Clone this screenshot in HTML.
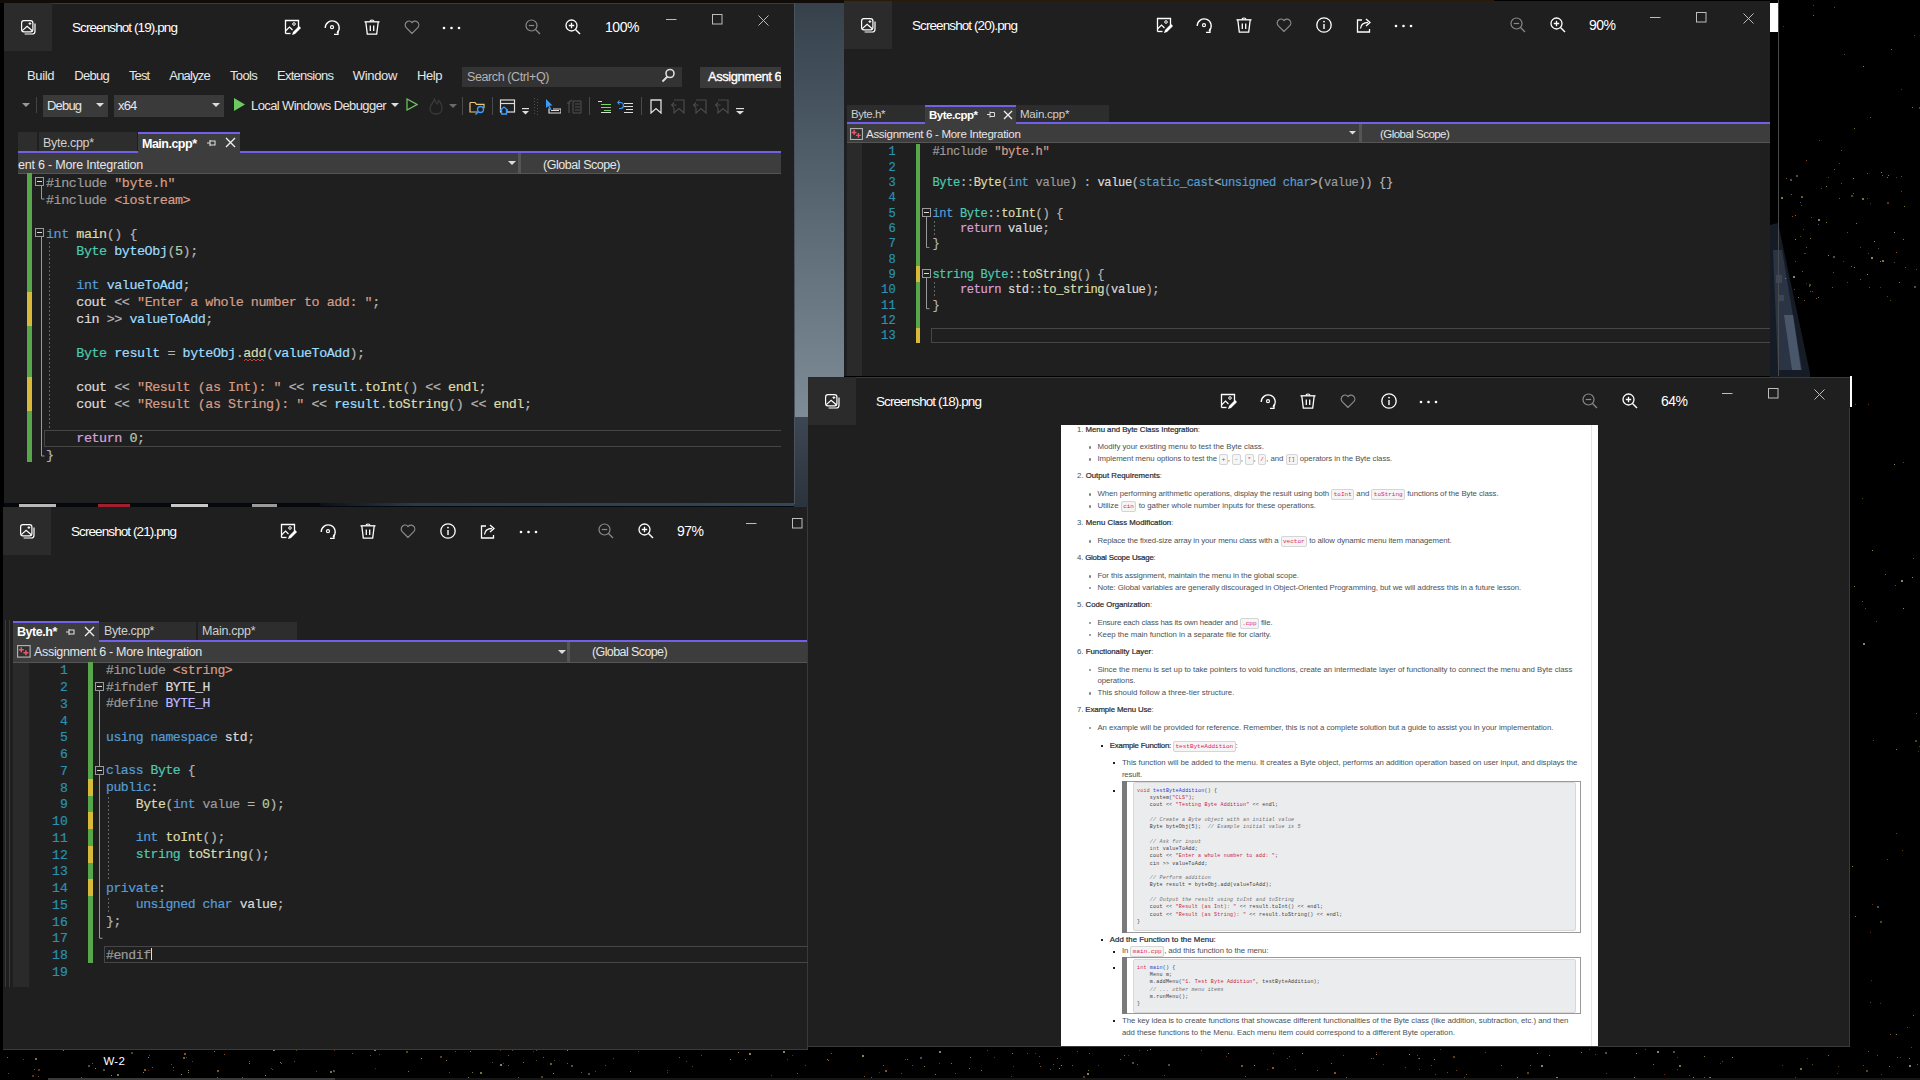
<!DOCTYPE html><html><head><meta charset="utf-8"><style>
html,body{margin:0;padding:0;width:1920px;height:1080px;overflow:hidden;background:#000;}
body{position:relative;}
</style></head><body>
<div style="position:absolute;left:0px;top:0px;width:1920px;height:1080px;background:#000;"></div>
<div style="position:absolute;left:794px;top:0px;width:50px;height:417px;background:linear-gradient(180deg,#35404a 0%,#4a5864 30%,#65737f 65%,#7e8c98 100%);"></div>
<div style="position:absolute;left:794px;top:417px;width:14px;height:90px;background:linear-gradient(180deg,#3d4753,#2b333c);"></div>
<div style="position:absolute;left:0px;top:0px;width:844px;height:3px;background:#120c08;"></div>
<div style="position:absolute;left:844px;top:0px;width:650px;height:1px;background:#2a1a0a;"></div>
<svg style="position:absolute;left:1770px;top:215px;" width="50" height="165" viewBox="0 0 50 165" fill="none"><path d="M0 10l8-2 32 150v7H0z" fill="#161c26"/><path d="M3 35l9 0 20 120H8z" fill="#2a3444"/><path d="M14 100l9 0 8 55h-9z" fill="#4a566a"/><path d="M6 60h6v8H6zM9 80h5v6H9z" fill="#3c4658"/></svg>
<div style="position:absolute;left:1778px;top:0px;width:1px;height:376px;background:#4a4a4a;"></div>
<div style="position:absolute;left:1862px;top:198px;width:2px;height:2px;background:#807040;"></div>
<div style="position:absolute;left:1881px;top:172px;width:1px;height:1px;background:#908060;"></div>
<div style="position:absolute;left:1798px;top:297px;width:1px;height:1px;background:#807040;"></div>
<div style="position:absolute;left:1804px;top:253px;width:1px;height:1px;background:#604018;"></div>
<div style="position:absolute;left:1794px;top:289px;width:1px;height:1px;background:#405060;"></div>
<div style="position:absolute;left:1834px;top:169px;width:1px;height:1px;background:#805420;"></div>
<div style="position:absolute;left:1802px;top:271px;width:1px;height:1px;background:#805420;"></div>
<div style="position:absolute;left:1887px;top:177px;width:1px;height:1px;background:#807040;"></div>
<div style="position:absolute;left:1841px;top:183px;width:1px;height:1px;background:#405060;"></div>
<div style="position:absolute;left:1888px;top:175px;width:1px;height:1px;background:#807040;"></div>
<div style="position:absolute;left:1811px;top:217px;width:1px;height:1px;background:#405060;"></div>
<div style="position:absolute;left:1795px;top:261px;width:1px;height:1px;background:#405060;"></div>
<div style="position:absolute;left:1792px;top:216px;width:1px;height:1px;background:#805420;"></div>
<div style="position:absolute;left:1791px;top:194px;width:1px;height:1px;background:#805420;"></div>
<div style="position:absolute;left:1854px;top:267px;width:1px;height:1px;background:#908060;"></div>
<div style="position:absolute;left:1816px;top:298px;width:1px;height:1px;background:#805420;"></div>
<div style="position:absolute;left:1810px;top:238px;width:1px;height:1px;background:#807040;"></div>
<div style="position:absolute;left:1826px;top:186px;width:1px;height:1px;background:#807040;"></div>
<div style="position:absolute;left:1828px;top:255px;width:1px;height:1px;background:#908060;"></div>
<div style="position:absolute;left:1804px;top:300px;width:1px;height:1px;background:#805420;"></div>
<div style="position:absolute;left:1796px;top:175px;width:2px;height:2px;background:#405060;"></div>
<div style="position:absolute;left:1832px;top:287px;width:1px;height:1px;background:#805420;"></div>
<div style="position:absolute;left:1916px;top:269px;width:1px;height:1px;background:#405060;"></div>
<div style="position:absolute;left:1860px;top:279px;width:1px;height:1px;background:#805420;"></div>
<div style="position:absolute;left:1896px;top:252px;width:1px;height:1px;background:#805420;"></div>
<div style="position:absolute;left:1856px;top:223px;width:1px;height:1px;background:#807040;"></div>
<div style="position:absolute;left:1826px;top:222px;width:1px;height:1px;background:#807040;"></div>
<div style="position:absolute;left:1800px;top:236px;width:1px;height:1px;background:#604018;"></div>
<div style="position:absolute;left:1914px;top:286px;width:2px;height:2px;background:#405060;"></div>
<div style="position:absolute;left:1867px;top:274px;width:1px;height:1px;background:#908060;"></div>
<div style="position:absolute;left:1853px;top:178px;width:1px;height:1px;background:#908060;"></div>
<div style="position:absolute;left:1810px;top:291px;width:1px;height:1px;background:#805420;"></div>
<div style="position:absolute;left:1887px;top:202px;width:2px;height:2px;background:#603018;"></div>
<div style="position:absolute;left:1867px;top:198px;width:1px;height:1px;background:#604018;"></div>
<div style="position:absolute;left:1905px;top:267px;width:1px;height:1px;background:#805420;"></div>
<div style="position:absolute;left:1790px;top:179px;width:2px;height:2px;background:#405060;"></div>
<div style="position:absolute;left:1860px;top:247px;width:1px;height:1px;background:#604018;"></div>
<div style="position:absolute;left:1869px;top:287px;width:1px;height:1px;background:#405060;"></div>
<div style="position:absolute;left:1896px;top:177px;width:1px;height:1px;background:#603018;"></div>
<div style="position:absolute;left:1803px;top:229px;width:1px;height:1px;background:#604018;"></div>
<div style="position:absolute;left:1901px;top:176px;width:1px;height:1px;background:#405060;"></div>
<div style="position:absolute;left:1795px;top:239px;width:1px;height:1px;background:#908060;"></div>
<div style="position:absolute;left:1894px;top:232px;width:1px;height:1px;background:#908060;"></div>
<div style="position:absolute;left:1878px;top:248px;width:1px;height:1px;background:#405060;"></div>
<div style="position:absolute;left:1785px;top:278px;width:1px;height:1px;background:#908060;"></div>
<div style="position:absolute;left:1870px;top:203px;width:1px;height:1px;background:#603018;"></div>
<div style="position:absolute;left:1809px;top:286px;width:1px;height:1px;background:#805420;"></div>
<div style="position:absolute;left:1795px;top:215px;width:1px;height:1px;background:#807040;"></div>
<div style="position:absolute;left:1853px;top:193px;width:1px;height:1px;background:#805420;"></div>
<div style="position:absolute;left:1843px;top:261px;width:1px;height:1px;background:#603018;"></div>
<div style="position:absolute;left:1880px;top:287px;width:1px;height:1px;background:#603018;"></div>
<div style="position:absolute;left:1800px;top:202px;width:1px;height:1px;background:#405060;"></div>
<div style="position:absolute;left:1894px;top:262px;width:1px;height:1px;background:#405060;"></div>
<div style="position:absolute;left:1851px;top:195px;width:2px;height:2px;background:#604018;"></div>
<div style="position:absolute;left:1890px;top:300px;width:1px;height:1px;background:#604018;"></div>
<div style="position:absolute;left:1851px;top:266px;width:1px;height:1px;background:#805420;"></div>
<div style="position:absolute;left:1871px;top:257px;width:2px;height:2px;background:#908060;"></div>
<div style="position:absolute;left:1839px;top:198px;width:1px;height:1px;background:#805420;"></div>
<div style="position:absolute;left:1801px;top:205px;width:1px;height:1px;background:#604018;"></div>
<div style="position:absolute;left:1818px;top:219px;width:2px;height:2px;background:#908060;"></div>
<div style="position:absolute;left:1839px;top:163px;width:1px;height:1px;background:#604018;"></div>
<div style="position:absolute;left:1904px;top:206px;width:1px;height:1px;background:#807040;"></div>
<div style="position:absolute;left:1847px;top:232px;width:1px;height:1px;background:#405060;"></div>
<div style="position:absolute;left:1781px;top:197px;width:2px;height:2px;background:#807040;"></div>
<div style="position:absolute;left:1887px;top:296px;width:1px;height:1px;background:#604018;"></div>
<div style="position:absolute;left:1874px;top:241px;width:1px;height:1px;background:#908060;"></div>
<div style="position:absolute;left:1812px;top:291px;width:1px;height:1px;background:#805420;"></div>
<div style="position:absolute;left:1793px;top:276px;width:2px;height:2px;background:#908060;"></div>
<div style="position:absolute;left:1880px;top:261px;width:1px;height:1px;background:#908060;"></div>
<div style="position:absolute;left:1882px;top:260px;width:2px;height:2px;background:#807040;"></div>
<div style="position:absolute;left:1806px;top:283px;width:1px;height:1px;background:#603018;"></div>
<div style="position:absolute;left:1882px;top:175px;width:1px;height:1px;background:#805420;"></div>
<div style="position:absolute;left:1828px;top:177px;width:1px;height:1px;background:#604018;"></div>
<div style="position:absolute;left:1833px;top:272px;width:1px;height:1px;background:#405060;"></div>
<div style="position:absolute;left:1821px;top:188px;width:1px;height:1px;background:#405060;"></div>
<div style="position:absolute;left:1867px;top:173px;width:1px;height:1px;background:#805420;"></div>
<div style="position:absolute;left:1806px;top:160px;width:1px;height:1px;background:#805420;"></div>
<div style="position:absolute;left:1818px;top:297px;width:1px;height:1px;background:#807040;"></div>
<div style="position:absolute;left:1805px;top:253px;width:1px;height:1px;background:#603018;"></div>
<div style="position:absolute;left:1786px;top:178px;width:1px;height:1px;background:#805420;"></div>
<div style="position:absolute;left:1833px;top:256px;width:2px;height:2px;background:#405060;"></div>
<div style="position:absolute;left:1818px;top:224px;width:1px;height:1px;background:#405060;"></div>
<div style="position:absolute;left:1868px;top:253px;width:1px;height:1px;background:#604018;"></div>
<div style="position:absolute;left:1901px;top:191px;width:1px;height:1px;background:#604018;"></div>
<div style="position:absolute;left:1809px;top:284px;width:2px;height:2px;background:#604018;"></div>
<div style="position:absolute;left:1899px;top:282px;width:1px;height:1px;background:#807040;"></div>
<div style="position:absolute;left:1903px;top:239px;width:1px;height:1px;background:#807040;"></div>
<div style="position:absolute;left:1801px;top:196px;width:2px;height:2px;background:#805420;"></div>
<div style="position:absolute;left:1806px;top:247px;width:1px;height:1px;background:#805420;"></div>
<div style="position:absolute;left:1847px;top:282px;width:1px;height:1px;background:#604018;"></div>
<div style="position:absolute;left:1872px;top:904px;width:1px;height:1px;background:#603018;"></div>
<div style="position:absolute;left:1854px;top:586px;width:1px;height:1px;background:#807040;"></div>
<div style="position:absolute;left:1919px;top:746px;width:1px;height:1px;background:#604018;"></div>
<div style="position:absolute;left:1870px;top:932px;width:1px;height:1px;background:#603018;"></div>
<div style="position:absolute;left:1855px;top:916px;width:1px;height:1px;background:#807040;"></div>
<div style="position:absolute;left:1890px;top:1034px;width:1px;height:1px;background:#805420;"></div>
<div style="position:absolute;left:1863px;top:643px;width:2px;height:2px;background:#908060;"></div>
<div style="position:absolute;left:1918px;top:751px;width:1px;height:1px;background:#603018;"></div>
<div style="position:absolute;left:1873px;top:740px;width:1px;height:1px;background:#405060;"></div>
<div style="position:absolute;left:1880px;top:921px;width:2px;height:2px;background:#604018;"></div>
<div style="position:absolute;left:1916px;top:713px;width:1px;height:1px;background:#805420;"></div>
<div style="position:absolute;left:1880px;top:1003px;width:1px;height:1px;background:#603018;"></div>
<div style="position:absolute;left:1876px;top:621px;width:1px;height:1px;background:#405060;"></div>
<div style="position:absolute;left:1903px;top:608px;width:1px;height:1px;background:#908060;"></div>
<div style="position:absolute;left:1877px;top:906px;width:2px;height:2px;background:#405060;"></div>
<div style="position:absolute;left:1915px;top:740px;width:2px;height:2px;background:#604018;"></div>
<div style="position:absolute;left:1855px;top:404px;width:1px;height:1px;background:#604018;"></div>
<div style="position:absolute;left:1887px;top:859px;width:1px;height:1px;background:#405060;"></div>
<div style="position:absolute;left:1885px;top:574px;width:1px;height:1px;background:#805420;"></div>
<div style="position:absolute;left:1896px;top:833px;width:1px;height:1px;background:#604018;"></div>
<div style="position:absolute;left:1896px;top:749px;width:1px;height:1px;background:#807040;"></div>
<div style="position:absolute;left:1862px;top:601px;width:1px;height:1px;background:#805420;"></div>
<div style="position:absolute;left:1865px;top:608px;width:1px;height:1px;background:#604018;"></div>
<div style="position:absolute;left:1912px;top:577px;width:1px;height:1px;background:#908060;"></div>
<div style="position:absolute;left:1895px;top:585px;width:1px;height:1px;background:#405060;"></div>
<div style="position:absolute;left:1913px;top:1015px;width:1px;height:1px;background:#807040;"></div>
<div style="position:absolute;left:1852px;top:866px;width:1px;height:1px;background:#807040;"></div>
<div style="position:absolute;left:1896px;top:1034px;width:1px;height:1px;background:#908060;"></div>
<div style="position:absolute;left:1862px;top:498px;width:1px;height:1px;background:#604018;"></div>
<div style="position:absolute;left:1901px;top:580px;width:2px;height:2px;background:#908060;"></div>
<div style="position:absolute;left:1913px;top:558px;width:1px;height:1px;background:#805420;"></div>
<div style="position:absolute;left:1907px;top:1027px;width:1px;height:1px;background:#405060;"></div>
<div style="position:absolute;left:1894px;top:464px;width:1px;height:1px;background:#908060;"></div>
<div style="position:absolute;left:1902px;top:850px;width:1px;height:1px;background:#604018;"></div>
<div style="position:absolute;left:1903px;top:462px;width:1px;height:1px;background:#604018;"></div>
<div style="position:absolute;left:1872px;top:550px;width:1px;height:1px;background:#908060;"></div>
<div style="position:absolute;left:1868px;top:404px;width:1px;height:1px;background:#603018;"></div>
<div style="position:absolute;left:1871px;top:980px;width:1px;height:1px;background:#603018;"></div>
<div style="position:absolute;left:1911px;top:1047px;width:1px;height:1px;background:#604018;"></div>
<div style="position:absolute;left:1870px;top:1002px;width:1px;height:1px;background:#405060;"></div>
<div style="position:absolute;left:1901px;top:89px;width:1px;height:1px;background:#603018;"></div>
<div style="position:absolute;left:1819px;top:140px;width:1px;height:1px;background:#405060;"></div>
<div style="position:absolute;left:1813px;top:5px;width:1px;height:1px;background:#604018;"></div>
<div style="position:absolute;left:1783px;top:26px;width:1px;height:1px;background:#603018;"></div>
<div style="position:absolute;left:1914px;top:35px;width:1px;height:1px;background:#405060;"></div>
<div style="position:absolute;left:1891px;top:49px;width:1px;height:1px;background:#807040;"></div>
<div style="position:absolute;left:1834px;top:7px;width:1px;height:1px;background:#604018;"></div>
<div style="position:absolute;left:1844px;top:54px;width:1px;height:1px;background:#405060;"></div>
<div style="position:absolute;left:1854px;top:128px;width:1px;height:1px;background:#807040;"></div>
<div style="position:absolute;left:1841px;top:150px;width:1px;height:1px;background:#805420;"></div>
<div style="position:absolute;left:1863px;top:66px;width:1px;height:1px;background:#908060;"></div>
<div style="position:absolute;left:1919px;top:107px;width:2px;height:2px;background:#604018;"></div>
<div style="position:absolute;left:1813px;top:15px;width:1px;height:1px;background:#807040;"></div>
<div style="position:absolute;left:1870px;top:117px;width:1px;height:1px;background:#805420;"></div>
<div style="position:absolute;left:1912px;top:107px;width:1px;height:1px;background:#807040;"></div>
<div style="position:absolute;left:1693px;top:1077px;width:1px;height:1px;background:#908060;"></div>
<div style="position:absolute;left:1027px;top:1053px;width:1px;height:1px;background:#405060;"></div>
<div style="position:absolute;left:1089px;top:1053px;width:1px;height:1px;background:#805420;"></div>
<div style="position:absolute;left:1072px;top:1065px;width:1px;height:1px;background:#805420;"></div>
<div style="position:absolute;left:38px;top:1076px;width:1px;height:1px;background:#805420;"></div>
<div style="position:absolute;left:901px;top:1073px;width:1px;height:1px;background:#405060;"></div>
<div style="position:absolute;left:375px;top:1068px;width:1px;height:1px;background:#603018;"></div>
<div style="position:absolute;left:8px;top:1073px;width:1px;height:1px;background:#405060;"></div>
<div style="position:absolute;left:1636px;top:1053px;width:1px;height:1px;background:#908060;"></div>
<div style="position:absolute;left:352px;top:1053px;width:1px;height:1px;background:#805420;"></div>
<div style="position:absolute;left:969px;top:1068px;width:1px;height:1px;background:#807040;"></div>
<div style="position:absolute;left:1485px;top:1052px;width:1px;height:1px;background:#604018;"></div>
<div style="position:absolute;left:1139px;top:1050px;width:1px;height:1px;background:#603018;"></div>
<div style="position:absolute;left:667px;top:1070px;width:1px;height:1px;background:#604018;"></div>
<div style="position:absolute;left:1061px;top:1065px;width:1px;height:1px;background:#908060;"></div>
<div style="position:absolute;left:1137px;top:1064px;width:1px;height:1px;background:#805420;"></div>
<div style="position:absolute;left:1606px;top:1073px;width:1px;height:1px;background:#604018;"></div>
<div style="position:absolute;left:217px;top:1077px;width:1px;height:1px;background:#805420;"></div>
<div style="position:absolute;left:1147px;top:1050px;width:1px;height:1px;background:#805420;"></div>
<div style="position:absolute;left:508px;top:1055px;width:1px;height:1px;background:#805420;"></div>
<div style="position:absolute;left:567px;top:1050px;width:1px;height:1px;background:#908060;"></div>
<div style="position:absolute;left:1581px;top:1052px;width:1px;height:1px;background:#807040;"></div>
<div style="position:absolute;left:1039px;top:1063px;width:1px;height:1px;background:#603018;"></div>
<div style="position:absolute;left:1150px;top:1049px;width:1px;height:1px;background:#908060;"></div>
<div style="position:absolute;left:1556px;top:1077px;width:2px;height:2px;background:#908060;"></div>
<div style="position:absolute;left:1868px;top:1051px;width:1px;height:1px;background:#805420;"></div>
<div style="position:absolute;left:907px;top:1059px;width:1px;height:1px;background:#807040;"></div>
<div style="position:absolute;left:1254px;top:1065px;width:1px;height:1px;background:#908060;"></div>
<div style="position:absolute;left:1241px;top:1065px;width:2px;height:2px;background:#805420;"></div>
<div style="position:absolute;left:408px;top:1071px;width:1px;height:1px;background:#807040;"></div>
<div style="position:absolute;left:567px;top:1063px;width:1px;height:1px;background:#805420;"></div>
<div style="position:absolute;left:1040px;top:1066px;width:1px;height:1px;background:#805420;"></div>
<div style="position:absolute;left:1653px;top:1064px;width:1px;height:1px;background:#807040;"></div>
<div style="position:absolute;left:1039px;top:1056px;width:1px;height:1px;background:#405060;"></div>
<div style="position:absolute;left:1431px;top:1065px;width:1px;height:1px;background:#405060;"></div>
<div style="position:absolute;left:1795px;top:1077px;width:1px;height:1px;background:#604018;"></div>
<div style="position:absolute;left:1900px;top:1057px;width:1px;height:1px;background:#604018;"></div>
<div style="position:absolute;left:1889px;top:1066px;width:1px;height:1px;background:#807040;"></div>
<div style="position:absolute;left:1828px;top:1055px;width:1px;height:1px;background:#807040;"></div>
<div style="position:absolute;left:1720px;top:1063px;width:1px;height:1px;background:#603018;"></div>
<div style="position:absolute;left:280px;top:1062px;width:1px;height:1px;background:#908060;"></div>
<div style="position:absolute;left:249px;top:1061px;width:1px;height:1px;background:#405060;"></div>
<div style="position:absolute;left:905px;top:1059px;width:1px;height:1px;background:#603018;"></div>
<div style="position:absolute;left:148px;top:1070px;width:1px;height:1px;background:#603018;"></div>
<div style="position:absolute;left:492px;top:1062px;width:1px;height:1px;background:#405060;"></div>
<div style="position:absolute;left:149px;top:1055px;width:1px;height:1px;background:#604018;"></div>
<div style="position:absolute;left:1371px;top:1058px;width:1px;height:1px;background:#805420;"></div>
<div style="position:absolute;left:1605px;top:1052px;width:2px;height:2px;background:#405060;"></div>
<div style="position:absolute;left:1837px;top:1073px;width:1px;height:1px;background:#603018;"></div>
<div style="position:absolute;left:316px;top:1071px;width:1px;height:1px;background:#604018;"></div>
<div style="position:absolute;left:1317px;top:1070px;width:1px;height:1px;background:#805420;"></div>
<div style="position:absolute;left:749px;top:1053px;width:2px;height:2px;background:#908060;"></div>
<div style="position:absolute;left:518px;top:1077px;width:1px;height:1px;background:#805420;"></div>
<div style="position:absolute;left:281px;top:1063px;width:1px;height:1px;background:#805420;"></div>
<div style="position:absolute;left:449px;top:1072px;width:1px;height:1px;background:#405060;"></div>
<div style="position:absolute;left:192px;top:1061px;width:1px;height:1px;background:#604018;"></div>
<div style="position:absolute;left:1812px;top:1064px;width:1px;height:1px;background:#604018;"></div>
<div style="position:absolute;left:333px;top:1070px;width:2px;height:2px;background:#405060;"></div>
<div style="position:absolute;left:1704px;top:1056px;width:1px;height:1px;background:#807040;"></div>
<div style="position:absolute;left:330px;top:1071px;width:2px;height:2px;background:#807040;"></div>
<div style="position:absolute;left:883px;top:1065px;width:1px;height:1px;background:#807040;"></div>
<div style="position:absolute;left:827px;top:1059px;width:1px;height:1px;background:#908060;"></div>
<div style="position:absolute;left:862px;top:1055px;width:2px;height:2px;background:#908060;"></div>
<div style="position:absolute;left:730px;top:1059px;width:1px;height:1px;background:#908060;"></div>
<div style="position:absolute;left:188px;top:1072px;width:1px;height:1px;background:#908060;"></div>
<div style="position:absolute;left:749px;top:1049px;width:1px;height:1px;background:#604018;"></div>
<div style="position:absolute;left:692px;top:1066px;width:1px;height:1px;background:#604018;"></div>
<div style="position:absolute;left:939px;top:1063px;width:1px;height:1px;background:#604018;"></div>
<div style="position:absolute;left:1440px;top:1049px;width:1px;height:1px;background:#604018;"></div>
<div style="position:absolute;left:787px;top:1059px;width:1px;height:1px;background:#603018;"></div>
<div style="position:absolute;left:1059px;top:1068px;width:1px;height:1px;background:#908060;"></div>
<div style="position:absolute;left:605px;top:1065px;width:1px;height:1px;background:#405060;"></div>
<div style="position:absolute;left:131px;top:1052px;width:2px;height:2px;background:#604018;"></div>
<div style="position:absolute;left:1881px;top:1074px;width:1px;height:1px;background:#603018;"></div>
<div style="position:absolute;left:468px;top:1077px;width:1px;height:1px;background:#807040;"></div>
<div style="position:absolute;left:214px;top:1051px;width:1px;height:1px;background:#807040;"></div>
<div style="position:absolute;left:543px;top:1057px;width:1px;height:1px;background:#805420;"></div>
<div style="position:absolute;left:81px;top:1077px;width:1px;height:1px;background:#805420;"></div>
<div style="position:absolute;left:1595px;top:1054px;width:1px;height:1px;background:#604018;"></div>
<div style="position:absolute;left:553px;top:1073px;width:1px;height:1px;background:#908060;"></div>
<div style="position:absolute;left:265px;top:1075px;width:1px;height:1px;background:#908060;"></div>
<div style="position:absolute;left:864px;top:1076px;width:1px;height:1px;background:#805420;"></div>
<div style="position:absolute;left:1866px;top:1070px;width:2px;height:2px;background:#604018;"></div>
<div style="position:absolute;left:1677px;top:1057px;width:1px;height:1px;background:#603018;"></div>
<div style="position:absolute;left:831px;top:1053px;width:1px;height:1px;background:#805420;"></div>
<div style="position:absolute;left:1098px;top:1065px;width:1px;height:1px;background:#603018;"></div>
<div style="position:absolute;left:1168px;top:1064px;width:2px;height:2px;background:#405060;"></div>
<div style="position:absolute;left:1434px;top:1059px;width:1px;height:1px;background:#908060;"></div>
<div style="position:absolute;left:183px;top:1057px;width:2px;height:2px;background:#805420;"></div>
<div style="position:absolute;left:117px;top:1074px;width:2px;height:2px;background:#807040;"></div>
<div style="position:absolute;left:1409px;top:1054px;width:1px;height:1px;background:#908060;"></div>
<div style="position:absolute;left:871px;top:1077px;width:1px;height:1px;background:#805420;"></div>
<div style="position:absolute;left:148px;top:1057px;width:1px;height:1px;background:#908060;"></div>
<div style="position:absolute;left:34px;top:1069px;width:1px;height:1px;background:#805420;"></div>
<div style="position:absolute;left:181px;top:1074px;width:1px;height:1px;background:#908060;"></div>
<div style="position:absolute;left:533px;top:1051px;width:1px;height:1px;background:#603018;"></div>
<div style="position:absolute;left:1245px;top:1076px;width:1px;height:1px;background:#805420;"></div>
<div style="position:absolute;left:455px;top:1051px;width:1px;height:1px;background:#405060;"></div>
<div style="position:absolute;left:541px;top:1076px;width:2px;height:2px;background:#604018;"></div>
<div style="position:absolute;left:249px;top:1063px;width:1px;height:1px;background:#908060;"></div>
<div style="position:absolute;left:23px;top:1059px;width:1px;height:1px;background:#604018;"></div>
<div style="position:absolute;left:1132px;top:1062px;width:2px;height:2px;background:#405060;"></div>
<div style="position:absolute;left:1897px;top:1057px;width:1px;height:1px;background:#405060;"></div>
<div style="position:absolute;left:1273px;top:1053px;width:1px;height:1px;background:#405060;"></div>
<div style="position:absolute;left:88px;top:1065px;width:2px;height:2px;background:#405060;"></div>
<div style="position:absolute;left:1453px;top:1056px;width:2px;height:2px;background:#604018;"></div>
<div style="position:absolute;left:224px;top:1054px;width:1px;height:1px;background:#805420;"></div>
<div style="position:absolute;left:536px;top:1050px;width:1px;height:1px;background:#405060;"></div>
<div style="position:absolute;left:370px;top:1055px;width:1px;height:1px;background:#405060;"></div>
<div style="position:absolute;left:1909px;top:1058px;width:1px;height:1px;background:#807040;"></div>
<div style="position:absolute;left:1287px;top:1058px;width:1px;height:1px;background:#405060;"></div>
<div style="position:absolute;left:1087px;top:1073px;width:2px;height:2px;background:#908060;"></div>
<div style="position:absolute;left:421px;top:1058px;width:1px;height:1px;background:#908060;"></div>
<div style="position:absolute;left:912px;top:1065px;width:1px;height:1px;background:#405060;"></div>
<div style="position:absolute;left:1376px;top:1054px;width:1px;height:1px;background:#908060;"></div>
<div style="position:absolute;left:554px;top:1060px;width:1px;height:1px;background:#405060;"></div>
<div style="position:absolute;left:1645px;top:1049px;width:1px;height:1px;background:#604018;"></div>
<div style="position:absolute;left:512px;top:1050px;width:1px;height:1px;background:#405060;"></div>
<div style="position:absolute;left:31px;top:1049px;width:1px;height:1px;background:#405060;"></div>
<div style="position:absolute;left:1501px;top:1065px;width:1px;height:1px;background:#805420;"></div>
<div style="position:absolute;left:1128px;top:1055px;width:1px;height:1px;background:#603018;"></div>
<div style="position:absolute;left:1053px;top:1064px;width:1px;height:1px;background:#405060;"></div>
<div style="position:absolute;left:503px;top:1063px;width:1px;height:1px;background:#604018;"></div>
<div style="position:absolute;left:217px;top:1070px;width:2px;height:2px;background:#805420;"></div>
<div style="position:absolute;left:1677px;top:1069px;width:1px;height:1px;background:#604018;"></div>
<div style="position:absolute;left:885px;top:1070px;width:2px;height:2px;background:#805420;"></div>
<div style="position:absolute;left:1013px;top:1066px;width:1px;height:1px;background:#603018;"></div>
<div style="position:absolute;left:1709px;top:1077px;width:2px;height:2px;background:#807040;"></div>
<div style="position:absolute;left:805px;top:1065px;width:1px;height:1px;background:#604018;"></div>
<div style="position:absolute;left:630px;top:1071px;width:1px;height:1px;background:#908060;"></div>
<div style="position:absolute;left:440px;top:1056px;width:2px;height:2px;background:#604018;"></div>
<div style="position:absolute;left:701px;top:1055px;width:1px;height:1px;background:#604018;"></div>
<div style="position:absolute;left:1704px;top:1077px;width:1px;height:1px;background:#805420;"></div>
<div style="position:absolute;left:1447px;top:1072px;width:1px;height:1px;background:#405060;"></div>
<div style="position:absolute;left:1302px;top:1053px;width:1px;height:1px;background:#908060;"></div>
<div style="position:absolute;left:828px;top:1060px;width:1px;height:1px;background:#805420;"></div>
<div style="position:absolute;left:111px;top:1075px;width:1px;height:1px;background:#908060;"></div>
<div style="position:absolute;left:265px;top:1049px;width:1px;height:1px;background:#603018;"></div>
<div style="position:absolute;left:144px;top:1069px;width:2px;height:2px;background:#805420;"></div>
<div style="position:absolute;left:1517px;top:1077px;width:1px;height:1px;background:#807040;"></div>
<div style="position:absolute;left:523px;top:1062px;width:1px;height:1px;background:#807040;"></div>
<div style="position:absolute;left:334px;top:1050px;width:1px;height:1px;background:#603018;"></div>
<div style="position:absolute;left:173px;top:1070px;width:1px;height:1px;background:#603018;"></div>
<div style="position:absolute;left:1722px;top:1061px;width:1px;height:1px;background:#405060;"></div>
<div style="position:absolute;left:1782px;top:1065px;width:1px;height:1px;background:#603018;"></div>
<div style="position:absolute;left:1373px;top:1058px;width:1px;height:1px;background:#805420;"></div>
<div style="position:absolute;left:1226px;top:1056px;width:1px;height:1px;background:#603018;"></div>
<div style="position:absolute;left:1418px;top:1058px;width:1px;height:1px;background:#405060;"></div>
<div style="position:absolute;left:92px;top:1063px;width:1px;height:1px;background:#805420;"></div>
<div style="position:absolute;left:379px;top:1054px;width:1px;height:1px;background:#604018;"></div>
<div style="position:absolute;left:550px;top:1063px;width:2px;height:2px;background:#805420;"></div>
<div style="position:absolute;left:7px;top:1057px;width:1px;height:1px;background:#807040;"></div>
<div style="position:absolute;left:745px;top:1059px;width:1px;height:1px;background:#807040;"></div>
<div style="position:absolute;left:1120px;top:1059px;width:1px;height:1px;background:#805420;"></div>
<div style="position:absolute;left:500px;top:1050px;width:1px;height:1px;background:#603018;"></div>
<div style="position:absolute;left:1807px;top:1058px;width:1px;height:1px;background:#603018;"></div>
<div style="position:absolute;left:446px;top:1060px;width:1px;height:1px;background:#807040;"></div>
<div style="position:absolute;left:374px;top:1049px;width:2px;height:2px;background:#908060;"></div>
<div style="position:absolute;left:686px;top:1061px;width:1px;height:1px;background:#604018;"></div>
<div style="position:absolute;left:171px;top:1064px;width:1px;height:1px;background:#405060;"></div>
<div style="position:absolute;left:571px;top:1065px;width:2px;height:2px;background:#405060;"></div>
<div style="position:absolute;left:1343px;top:1055px;width:1px;height:1px;background:#405060;"></div>
<div style="position:absolute;left:508px;top:1065px;width:1px;height:1px;background:#805420;"></div>
<div style="position:absolute;left:1589px;top:1049px;width:1px;height:1px;background:#603018;"></div>
<div style="position:absolute;left:186px;top:1057px;width:1px;height:1px;background:#405060;"></div>
<div style="position:absolute;left:1673px;top:1051px;width:2px;height:2px;background:#405060;"></div>
<div style="position:absolute;left:294px;top:1061px;width:1px;height:1px;background:#405060;"></div>
<div style="position:absolute;left:1201px;top:1050px;width:1px;height:1px;background:#405060;"></div>
<div style="position:absolute;left:806px;top:1049px;width:1px;height:1px;background:#805420;"></div>
<div style="position:absolute;left:613px;top:1058px;width:1px;height:1px;background:#604018;"></div>
<div style="position:absolute;left:1289px;top:1056px;width:1px;height:1px;background:#405060;"></div>
<div style="position:absolute;left:173px;top:1067px;width:1px;height:1px;background:#805420;"></div>
<div style="position:absolute;left:1083px;top:1076px;width:2px;height:2px;background:#603018;"></div>
<div style="position:absolute;left:1537px;top:1053px;width:1px;height:1px;background:#807040;"></div>
<div style="position:absolute;left:1346px;top:1077px;width:1px;height:1px;background:#805420;"></div>
<div style="position:absolute;left:1466px;top:1074px;width:1px;height:1px;background:#805420;"></div>
<div style="position:absolute;left:1800px;top:1068px;width:2px;height:2px;background:#807040;"></div>
<div style="position:absolute;left:797px;top:1073px;width:1px;height:1px;background:#805420;"></div>
<div style="position:absolute;left:667px;top:1072px;width:1px;height:1px;background:#603018;"></div>
<div style="position:absolute;left:1012px;top:1053px;width:1px;height:1px;background:#807040;"></div>
<div style="position:absolute;left:581px;top:1072px;width:1px;height:1px;background:#805420;"></div>
<div style="position:absolute;left:1267px;top:1069px;width:1px;height:1px;background:#603018;"></div>
<div style="position:absolute;left:296px;top:1050px;width:1px;height:1px;background:#604018;"></div>
<div style="position:absolute;left:1689px;top:1075px;width:1px;height:1px;background:#405060;"></div>
<div style="position:absolute;left:1464px;top:1077px;width:1px;height:1px;background:#604018;"></div>
<div style="position:absolute;left:1050px;top:1069px;width:1px;height:1px;background:#805420;"></div>
<div style="position:absolute;left:879px;top:1072px;width:1px;height:1px;background:#603018;"></div>
<div style="position:absolute;left:1435px;top:1074px;width:1px;height:1px;background:#604018;"></div>
<div style="position:absolute;left:1035px;top:1053px;width:1px;height:1px;background:#603018;"></div>
<div style="position:absolute;left:1863px;top:1065px;width:1px;height:1px;background:#405060;"></div>
<div style="position:absolute;left:1541px;top:1065px;width:2px;height:2px;background:#908060;"></div>
<div style="position:absolute;left:1164px;top:1075px;width:1px;height:1px;background:#405060;"></div>
<div style="position:absolute;left:1664px;top:1074px;width:1px;height:1px;background:#603018;"></div>
<div style="position:absolute;left:32px;top:1075px;width:2px;height:2px;background:#603018;"></div>
<div style="position:absolute;left:1405px;top:1067px;width:1px;height:1px;background:#604018;"></div>
<div style="position:absolute;left:1634px;top:1077px;width:1px;height:1px;background:#908060;"></div>
<div style="position:absolute;left:1456px;top:1070px;width:1px;height:1px;background:#604018;"></div>
<div style="position:absolute;left:1419px;top:1069px;width:1px;height:1px;background:#405060;"></div>
<div style="position:absolute;left:470px;top:1051px;width:1px;height:1px;background:#807040;"></div>
<div style="position:absolute;left:63px;top:1050px;width:1px;height:1px;background:#807040;"></div>
<div style="position:absolute;left:272px;top:1069px;width:1px;height:1px;background:#405060;"></div>
<div style="position:absolute;left:738px;top:1052px;width:1px;height:1px;background:#908060;"></div>
<div style="position:absolute;left:771px;top:1075px;width:1px;height:1px;background:#603018;"></div>
<div style="position:absolute;left:924px;top:1066px;width:1px;height:1px;background:#807040;"></div>
<div style="position:absolute;left:103px;top:1069px;width:2px;height:2px;background:#405060;"></div>
<div style="position:absolute;left:38px;top:1069px;width:2px;height:2px;background:#603018;"></div>
<div style="position:absolute;left:1088px;top:1070px;width:1px;height:1px;background:#807040;"></div>
<div style="position:absolute;left:500px;top:1064px;width:2px;height:2px;background:#908060;"></div>
<div style="position:absolute;left:540px;top:1049px;width:1px;height:1px;background:#807040;"></div>
<div style="position:absolute;left:935px;top:1074px;width:1px;height:1px;background:#807040;"></div>
<div style="position:absolute;left:143px;top:1072px;width:1px;height:1px;background:#908060;"></div>
<div style="position:absolute;left:1909px;top:1065px;width:2px;height:2px;background:#908060;"></div>
<div style="position:absolute;left:1838px;top:1066px;width:1px;height:1px;background:#604018;"></div>
<div style="position:absolute;left:188px;top:1070px;width:1px;height:1px;background:#908060;"></div>
<div style="position:absolute;left:1077px;top:1051px;width:1px;height:1px;background:#405060;"></div>
<div style="position:absolute;left:1527px;top:1072px;width:2px;height:2px;background:#604018;"></div>
<div style="position:absolute;left:970px;top:1057px;width:1px;height:1px;background:#807040;"></div>
<div style="position:absolute;left:1657px;top:1051px;width:2px;height:2px;background:#908060;"></div>
<div style="position:absolute;left:1732px;top:1057px;width:1px;height:1px;background:#908060;"></div>
<div style="position:absolute;left:480px;top:1072px;width:2px;height:2px;background:#807040;"></div>
<div style="position:absolute;left:1549px;top:1055px;width:1px;height:1px;background:#807040;"></div>
<div style="position:absolute;left:472px;top:1072px;width:1px;height:1px;background:#807040;"></div>
<div style="position:absolute;left:1331px;top:1063px;width:1px;height:1px;background:#807040;"></div>
<div style="position:absolute;left:1011px;top:1076px;width:1px;height:1px;background:#604018;"></div>
<div style="position:absolute;left:783px;top:1051px;width:2px;height:2px;background:#908060;"></div>
<div style="position:absolute;left:981px;top:1070px;width:1px;height:1px;background:#807040;"></div>
<div style="position:absolute;left:588px;top:1073px;width:2px;height:2px;background:#405060;"></div>
<div style="position:absolute;left:95px;top:1068px;width:1px;height:1px;background:#908060;"></div>
<div style="position:absolute;left:1295px;top:1069px;width:1px;height:1px;background:#604018;"></div>
<div style="position:absolute;left:406px;top:1051px;width:2px;height:2px;background:#604018;"></div>
<div style="position:absolute;left:1228px;top:1053px;width:1px;height:1px;background:#807040;"></div>
<div style="position:absolute;left:679px;top:1057px;width:1px;height:1px;background:#805420;"></div>
<div style="position:absolute;left:1334px;top:1072px;width:2px;height:2px;background:#805420;"></div>
<div style="position:absolute;left:1419px;top:1058px;width:1px;height:1px;background:#908060;"></div>
<div style="position:absolute;left:1272px;top:1067px;width:2px;height:2px;background:#805420;"></div>
<div style="position:absolute;left:273px;top:1049px;width:2px;height:2px;background:#908060;"></div>
<div style="position:absolute;left:987px;top:1050px;width:1px;height:1px;background:#604018;"></div>
<div style="position:absolute;left:994px;top:1057px;width:1px;height:1px;background:#603018;"></div>
<div style="position:absolute;left:1376px;top:1052px;width:1px;height:1px;background:#603018;"></div>
<div style="position:absolute;left:1417px;top:1055px;width:1px;height:1px;background:#604018;"></div>
<div style="position:absolute;left:1383px;top:1064px;width:1px;height:1px;background:#603018;"></div>
<div style="position:absolute;left:595px;top:1071px;width:1px;height:1px;background:#604018;"></div>
<div style="position:absolute;left:1057px;top:1058px;width:1px;height:1px;background:#805420;"></div>
<div style="position:absolute;left:951px;top:1063px;width:1px;height:1px;background:#807040;"></div>
<div style="position:absolute;left:955px;top:1073px;width:1px;height:1px;background:#405060;"></div>
<div style="position:absolute;left:242px;top:1077px;width:1px;height:1px;background:#805420;"></div>
<div style="position:absolute;left:1124px;top:1055px;width:1px;height:1px;background:#807040;"></div>
<div style="position:absolute;left:638px;top:1051px;width:1px;height:1px;background:#405060;"></div>
<div style="position:absolute;left:1917px;top:1064px;width:1px;height:1px;background:#805420;"></div>
<div style="position:absolute;left:35px;top:1058px;width:2px;height:2px;background:#807040;"></div>
<div style="position:absolute;left:939px;top:1051px;width:2px;height:2px;background:#908060;"></div>
<div style="position:absolute;left:1679px;top:1065px;width:2px;height:2px;background:#807040;"></div>
<div style="position:absolute;left:920px;top:1057px;width:2px;height:2px;background:#405060;"></div>
<div style="position:absolute;left:792px;top:1055px;width:1px;height:1px;background:#603018;"></div>
<div style="position:absolute;left:1877px;top:1055px;width:1px;height:1px;background:#604018;"></div>
<div style="position:absolute;left:152px;top:1067px;width:1px;height:1px;background:#805420;"></div>
<div style="position:absolute;left:184px;top:1053px;width:2px;height:2px;background:#805420;"></div>
<div style="position:absolute;left:1530px;top:1065px;width:1px;height:1px;background:#805420;"></div>
<div style="position:absolute;left:536px;top:1060px;width:1px;height:1px;background:#604018;"></div>
<div style="position:absolute;left:271px;top:1068px;width:1px;height:1px;background:#604018;"></div>
<div style="position:absolute;left:48px;top:1078px;width:287px;height:2px;background:#3a3a3a;"></div>
<div style="position:absolute;left:335px;top:1078px;width:1585px;height:2px;background:#151515;"></div>
<div style="position:absolute;left:103.5px;top:1049.5px;height:23.0px;line-height:23.0px;font-family:'Liberation Sans',sans-serif;font-size:11.5px;color:#ffffff;white-space:pre;letter-spacing:0.208px;">W-2</div>
<div style="position:absolute;left:14px;top:1032px;height:22px;line-height:22px;font-family:'Liberation Sans',sans-serif;font-size:11px;color:#e0e0e0;white-space:pre;">Tax Days</div>
<div style="position:absolute;left:83px;top:1032px;height:22px;line-height:22px;font-family:'Liberation Sans',sans-serif;font-size:11px;color:#e0e0e0;white-space:pre;">Married 2023</div>
<div style="position:absolute;left:4px;top:3px;width:790px;height:500px;background:#1f1f1f;"></div>
<div style="position:absolute;left:4px;top:3px;width:790px;height:1px;background:#3a3a3a;"></div>
<div style="position:absolute;left:794px;top:3px;width:1px;height:501px;background:#4a545e;"></div>
<div style="position:absolute;left:4px;top:3px;width:48px;height:48px;background:#2b2b2b;"></div>
<svg style="position:absolute;left:20.5px;top:19.5px;" width="15" height="15" viewBox="0 0 15 15" fill="none"><rect x="0.6" y="0.6" width="11.3" height="11.3" rx="2.3" stroke="#fff" stroke-width="1.2"/><path d="M1.3 10.6l4.8-4.4 5.2 4.6" stroke="#fff" stroke-width="1.2"/><path d="M14 3.6v7.6a2.8 2.8 0 0 1-2.8 2.8H3.6" stroke="#fff" stroke-width="1.2"/><path d="M8.9 2.2v2.8M7.5 3.6h2.8" stroke="#fff" stroke-width="1"/></svg>
<div style="position:absolute;left:72px;top:13.5px;height:27.0px;line-height:27.0px;font-family:'Liberation Sans',sans-serif;font-size:13.5px;color:#ffffff;white-space:pre;letter-spacing:-0.912px;">Screenshot (19).png</div>
<svg style="position:absolute;left:284px;top:18.5px;" width="17" height="17" viewBox="0 0 17 17" fill="none"><path d="M1.5 14.5V1.5h13v7" stroke="#fff" stroke-width="1.3"/><path d="M1.5 14.5h5" stroke="#fff" stroke-width="1.3"/><circle cx="10" cy="5" r="1.3" stroke="#fff" stroke-width="1"/><path d="M1.5 12l4-4 3 3" stroke="#fff" stroke-width="1.2"/><path d="M8 16l1-3 6-6 2 2-6 6z" fill="#fff"/></svg>
<svg style="position:absolute;left:324px;top:18.5px;" width="17" height="17" viewBox="0 0 17 17" fill="none"><path d="M1.2 9A7 7 0 1 1 13 14" stroke="#fff" stroke-width="1.3"/><path d="M14 11.5v3.8h-4" stroke="#fff" stroke-width="1.3"/><circle cx="8" cy="8.2" r="1.5" stroke="#fff" stroke-width="1.2"/></svg>
<svg style="position:absolute;left:364px;top:18.5px;" width="17" height="17" viewBox="0 0 17 17" fill="none"><path d="M0.5 2.8h15" stroke="#fff" stroke-width="1.3"/><path d="M6 2.5a2 1.5 0 0 1 4 0" stroke="#fff" stroke-width="1.2"/><path d="M1.8 3l1.5 12.2h9.4L14.2 3" stroke="#fff" stroke-width="1.3"/><path d="M6.3 6.5v5.5M9.7 6.5v5.5" stroke="#fff" stroke-width="1.3"/></svg>
<svg style="position:absolute;left:404px;top:18.5px;" width="17" height="17" viewBox="0 0 17 17" fill="none"><path d="M8 14.5L2 8.3A3.4 3.4 0 0 1 8 3.6a3.4 3.4 0 0 1 6 4.7z" stroke="#8a8a8a" stroke-width="1.2"/></svg>
<svg style="position:absolute;left:442px;top:18.5px;" width="20" height="17" viewBox="0 0 20 17" fill="none"><circle cx="2" cy="9" r="1.3" fill="#fff"/><circle cx="9.5" cy="9" r="1.3" fill="#fff"/><circle cx="17" cy="9" r="1.3" fill="#fff"/></svg>
<svg style="position:absolute;left:525px;top:18.5px;" width="17" height="17" viewBox="0 0 17 17" fill="none"><circle cx="6.5" cy="6.5" r="5.5" stroke="#8a8a8a" stroke-width="1.2"/><path d="M10.5 10.5l4.5 4.5" stroke="#8a8a8a" stroke-width="1.3"/><path d="M3.8 6.5h5.4" stroke="#8a8a8a" stroke-width="1.2"/></svg>
<svg style="position:absolute;left:565px;top:18.5px;" width="17" height="17" viewBox="0 0 17 17" fill="none"><circle cx="6.5" cy="6.5" r="5.5" stroke="#fff" stroke-width="1.3"/><path d="M10.5 10.5l4.5 4.5" stroke="#fff" stroke-width="1.4"/><path d="M3.8 6.5h5.4M6.5 3.8v5.4" stroke="#fff" stroke-width="1.3"/></svg>
<div style="position:absolute;left:605px;top:13px;height:28px;line-height:28px;font-family:'Liberation Sans',sans-serif;font-size:14px;color:#ffffff;white-space:pre;letter-spacing:-0.453px;">100%</div>
<svg style="position:absolute;left:666px;top:19px;" width="11" height="2" viewBox="0 0 11 2" fill="none"><path d="M0 0.5h10.5" stroke="#bdbdbd" stroke-width="1"/></svg>
<svg style="position:absolute;left:712px;top:14px;" width="11" height="11" viewBox="0 0 11 11" fill="none"><rect x="0.5" y="0.5" width="9.5" height="9.5" stroke="#bdbdbd" stroke-width="1"/></svg>
<svg style="position:absolute;left:757.5px;top:14.5px;" width="11" height="11" viewBox="0 0 11 11" fill="none"><path d="M0.5 0.5l10 10M10.5 0.5l-10 10" stroke="#bdbdbd" stroke-width="1"/></svg>
<div style="position:absolute;left:27px;top:63px;height:26px;line-height:26px;font-family:'Liberation Sans',sans-serif;font-size:13px;color:#e6e6e6;white-space:pre;letter-spacing:-0.384px;">Build</div>
<div style="position:absolute;left:74.25px;top:63px;height:26px;line-height:26px;font-family:'Liberation Sans',sans-serif;font-size:13px;color:#e6e6e6;white-space:pre;letter-spacing:-0.713px;">Debug</div>
<div style="position:absolute;left:129px;top:63px;height:26px;line-height:26px;font-family:'Liberation Sans',sans-serif;font-size:13px;color:#e6e6e6;white-space:pre;letter-spacing:-0.898px;">Test</div>
<div style="position:absolute;left:169.25px;top:63px;height:26px;line-height:26px;font-family:'Liberation Sans',sans-serif;font-size:13px;color:#e6e6e6;white-space:pre;letter-spacing:-0.786px;">Analyze</div>
<div style="position:absolute;left:230px;top:63px;height:26px;line-height:26px;font-family:'Liberation Sans',sans-serif;font-size:13px;color:#e6e6e6;white-space:pre;letter-spacing:-0.672px;">Tools</div>
<div style="position:absolute;left:277px;top:63px;height:26px;line-height:26px;font-family:'Liberation Sans',sans-serif;font-size:13px;color:#e6e6e6;white-space:pre;letter-spacing:-0.734px;">Extensions</div>
<div style="position:absolute;left:352.75px;top:63px;height:26px;line-height:26px;font-family:'Liberation Sans',sans-serif;font-size:13px;color:#e6e6e6;white-space:pre;letter-spacing:-0.333px;">Window</div>
<div style="position:absolute;left:417px;top:63px;height:26px;line-height:26px;font-family:'Liberation Sans',sans-serif;font-size:13px;color:#e6e6e6;white-space:pre;letter-spacing:-0.438px;">Help</div>
<div style="position:absolute;left:462px;top:67px;width:220px;height:20px;background:#333333;"></div>
<div style="position:absolute;left:467px;top:64.5px;height:25.0px;line-height:25.0px;font-family:'Liberation Sans',sans-serif;font-size:12.5px;color:#b4b4b4;white-space:pre;letter-spacing:-0.392px;">Search (Ctrl+Q)</div>
<svg style="position:absolute;left:660px;top:68px;" width="16" height="16" viewBox="0 0 16 16" fill="none"><circle cx="10" cy="5.5" r="4" stroke="#ddd" stroke-width="1.6"/><path d="M7.5 8.5l-5 5" stroke="#ddd" stroke-width="2"/></svg>
<div style="position:absolute;left:700px;top:67px;width:81px;height:21px;background:#3a3a3a;"></div>
<div style="position:absolute;left:700px;top:67px;width:81px;height:21px;overflow:hidden"><div style="position:absolute;left:8px;top:-1.5px;line-height:21px;font-family:'Liberation Sans',sans-serif;font-size:13px;color:#fff;white-space:pre;-webkit-text-stroke:0.35px #fff;letter-spacing:-0.45px">Assignment 6 - More</div></div>
<svg style="position:absolute;left:21px;top:102px;" width="10" height="6" viewBox="0 0 10 6" fill="none"><path d="M1 1h8l-4 4z" fill="#999"/></svg>
<div style="position:absolute;left:36px;top:97px;width:1px;height:16px;background:#444;"></div>
<div style="position:absolute;left:43px;top:95px;width:65px;height:22px;background:#3a3a3a;"></div>
<div style="position:absolute;left:47px;top:93px;height:26px;line-height:26px;font-family:'Liberation Sans',sans-serif;font-size:13px;color:#e6e6e6;white-space:pre;letter-spacing:-0.812px;">Debug</div>
<svg style="position:absolute;left:96px;top:103px;" width="8" height="5" viewBox="0 0 8 5" fill="none"><path d="M0 0h8l-4 4z" fill="#ddd"/></svg>
<div style="position:absolute;left:114px;top:95px;width:110px;height:22px;background:#3a3a3a;"></div>
<div style="position:absolute;left:118px;top:93px;height:26px;line-height:26px;font-family:'Liberation Sans',sans-serif;font-size:13px;color:#e6e6e6;white-space:pre;letter-spacing:-0.823px;">x64</div>
<svg style="position:absolute;left:212px;top:103px;" width="8" height="5" viewBox="0 0 8 5" fill="none"><path d="M0 0h8l-4 4z" fill="#ddd"/></svg>
<svg style="position:absolute;left:234px;top:98px;" width="11" height="13" viewBox="0 0 11 13" fill="none"><path d="M0 0l11 6.5L0 13z" fill="#6ccb5f"/></svg>
<div style="position:absolute;left:251px;top:93px;height:26px;line-height:26px;font-family:'Liberation Sans',sans-serif;font-size:13px;color:#e6e6e6;white-space:pre;letter-spacing:-0.597px;">Local Windows Debugger</div>
<svg style="position:absolute;left:391px;top:103px;" width="8" height="5" viewBox="0 0 8 5" fill="none"><path d="M0 0h8l-4 4z" fill="#ddd"/></svg>
<svg style="position:absolute;left:406px;top:98px;" width="12" height="13" viewBox="0 0 12 13" fill="none"><path d="M1 1l10 5.5L1 12z" stroke="#6ccb5f" stroke-width="1.2"/></svg>
<svg style="position:absolute;left:429px;top:98px;" width="14" height="17" viewBox="0 0 14 17" fill="none"><path d="M7 16c-3.5 0-6-2.3-6-5.5 0-3.5 3-5 4.5-9.5 1.2 2.5 1 4 3 5 .5-1.5 1-2.5 1-3.5 2.5 2.2 3.5 4.8 3.5 8 0 3.2-2.5 5.5-6 5.5z" stroke="#3a3a3a" stroke-width="1.3"/></svg>
<svg style="position:absolute;left:449px;top:104px;" width="8" height="5" viewBox="0 0 8 5" fill="none"><path d="M0 0h8l-4 4z" fill="#6a6a6a"/></svg>
<div style="position:absolute;left:462px;top:97px;width:1px;height:18px;background:#4a4a4a;"></div>
<svg style="position:absolute;left:469px;top:99px;" width="17" height="16" viewBox="0 0 17 16" fill="none"><path d="M1 3.5h5l1.5 1.8H15v4M1 3.5v9.5h7" stroke="#e8c87a" stroke-width="1.2"/><circle cx="11.5" cy="10.5" r="3" stroke="#3b9cff" stroke-width="1.3"/><path d="M9.3 12.7L6.5 15.5" stroke="#3b9cff" stroke-width="1.5"/></svg>
<div style="position:absolute;left:492px;top:97px;width:1px;height:18px;background:#4a4a4a;"></div>
<svg style="position:absolute;left:499px;top:99px;" width="17" height="16" viewBox="0 0 17 16" fill="none"><rect x="1.5" y="1" width="14" height="12" stroke="#dcdcdc" stroke-width="1.2"/><path d="M1.5 4.5h14" stroke="#dcdcdc" stroke-width="1.2"/><path d="M1 11.5l4-3.5 4 3.5M2.5 10.5v4.5h5v-4.5" stroke="#3b9cff" stroke-width="1.3" fill="#1f1f1f"/></svg>
<svg style="position:absolute;left:522px;top:108px;" width="7" height="7" viewBox="0 0 7 7" fill="none"><path d="M0 0.6h7" stroke="#ddd" stroke-width="1.2"/><path d="M0 3h7l-3.5 3.5z" fill="#ddd"/></svg>
<svg style="position:absolute;left:533px;top:97px;" width="6" height="18" viewBox="0 0 6 18" fill="none"><path d="M1.5 1v16M4.5 2v16" stroke="#505050" stroke-dasharray="1 2" stroke-width="1"/></svg>
<svg style="position:absolute;left:545px;top:98px;" width="16" height="17" viewBox="0 0 16 17" fill="none"><path d="M1 1v9l2.2-2 2 4 1.3-.6-2-4h3z" fill="#3b9cff"/><path d="M4 10.5v4.5h12v-4H8" stroke="#dcdcdc" stroke-width="1.2"/><path d="M6 12.5h8" stroke="#dcdcdc" stroke-width="1"/></svg>
<svg style="position:absolute;left:566px;top:99px;" width="16" height="15" viewBox="0 0 16 15" fill="none"><path d="M3 14V3l3-2M1 4h3" stroke="#505050" stroke-width="1.1"/><path d="M7 2h8v12H7zM9 5h5M9 8h5M9 11h5" stroke="#505050" stroke-width="1"/></svg>
<div style="position:absolute;left:589px;top:97px;width:1px;height:18px;background:#4a4a4a;"></div>
<svg style="position:absolute;left:598px;top:100px;" width="13" height="13" viewBox="0 0 13 13" fill="none"><path d="M0 1.5h4M3 4.5h10M3 7.5h10M6 10.5h7M3 12.5h10" stroke="#dcdcdc" stroke-width="1"/><path d="M3 4.5h10M3 7.5h10M6 10.5h7" stroke="#7cd36a" stroke-width="1"/></svg>
<svg style="position:absolute;left:617px;top:99px;" width="17" height="15" viewBox="0 0 17 15" fill="none"><path d="M1 3.5h2.5a3 3 0 0 1 0 6H2" stroke="#3b9cff" stroke-width="1.2"/><path d="M2.5 1.5L.8 3.5l1.7 2" stroke="#3b9cff" stroke-width="1.1"/><path d="M7 4.5h9M7 7.5h9M9 10.5h7M7 13.5h9" stroke="#dcdcdc" stroke-width="1"/></svg>
<div style="position:absolute;left:641px;top:97px;width:1px;height:18px;background:#4a4a4a;"></div>
<svg style="position:absolute;left:650px;top:99px;" width="12" height="15" viewBox="0 0 12 15" fill="none"><path d="M1 1h10v13l-5-4.5L1 14z" stroke="#dcdcdc" stroke-width="1.3"/></svg>
<svg style="position:absolute;left:671px;top:99px;" width="14" height="15" viewBox="0 0 14 15" fill="none"><path d="M3 1h10v13l-5-4.5L3 14V9" stroke="#4a4a4a" stroke-width="1.2"/><path d="M0.5 6h5M3 3.5L.5 6 3 8.5" stroke="#4a4a4a" stroke-width="1.1"/></svg>
<svg style="position:absolute;left:693px;top:99px;" width="14" height="15" viewBox="0 0 14 15" fill="none"><path d="M3 1h10v13l-5-4.5L3 14V9" stroke="#4a4a4a" stroke-width="1.2"/><path d="M0.5 6h5M3 3.5L.5 6 3 8.5" stroke="#4a4a4a" stroke-width="1.1"/></svg>
<svg style="position:absolute;left:715px;top:99px;" width="14" height="15" viewBox="0 0 14 15" fill="none"><path d="M3 1h10v13l-5-4.5L3 14V9" stroke="#4a4a4a" stroke-width="1.2"/><path d="M0.5 6h5M3 3.5L.5 6 3 8.5" stroke="#4a4a4a" stroke-width="1.1"/></svg>
<svg style="position:absolute;left:736px;top:108px;" width="8" height="7" viewBox="0 0 8 7" fill="none"><path d="M0 0.6h8" stroke="#ddd" stroke-width="1.2"/><path d="M0 3h8l-4 3.5z" fill="#ddd"/></svg>
<div style="position:absolute;left:18px;top:132px;width:19px;height:19px;background:#2d2d2d;"></div>
<div style="position:absolute;left:39px;top:132px;width:98px;height:19px;background:#2d2d2d;"></div>
<div style="position:absolute;left:43px;top:130.5px;height:25.0px;line-height:25.0px;font-family:'Liberation Sans',sans-serif;font-size:12.5px;color:#d0d0d0;white-space:pre;letter-spacing:-0.307px;">Byte.cpp*</div>
<div style="position:absolute;left:138px;top:132px;width:102px;height:19px;background:#3d3d3d;"></div>
<div style="position:absolute;left:138px;top:132px;width:102px;height:2px;background:#7160e8;"></div>
<div style="position:absolute;left:142px;top:131.5px;height:25.0px;line-height:25.0px;font-family:'Liberation Sans',sans-serif;font-size:12.5px;color:#ffffff;white-space:pre;letter-spacing:-0.505px;font-weight:bold">Main.cpp*</div>
<svg style="position:absolute;left:206px;top:138px;" width="11" height="10" viewBox="0 0 11 10" fill="none"><path d="M1 5h3M4 2v6M4 3h5v4H4" stroke="#ddd" stroke-width="1.1"/></svg>
<svg style="position:absolute;left:225px;top:137px;" width="11" height="11" viewBox="0 0 11 11" fill="none"><path d="M1 1l9 9M10 1l-9 9" stroke="#eee" stroke-width="1.4"/></svg>
<div style="position:absolute;left:18px;top:151px;width:763px;height:2px;background:#7160e8;"></div>
<div style="position:absolute;left:138px;top:151px;width:102px;height:2px;background:#3d3d3d;"></div>
<div style="position:absolute;left:18px;top:153px;width:763px;height:21px;background:#3d3d3d;"></div>
<div style="position:absolute;left:18px;top:173px;width:763px;height:1px;background:#555;"></div>
<div style="position:absolute;left:18px;top:152.5px;height:25.0px;line-height:25.0px;font-family:'Liberation Sans',sans-serif;font-size:12.5px;color:#e6e6e6;white-space:pre;letter-spacing:-0.206px;">ent 6 - More Integration</div>
<svg style="position:absolute;left:508px;top:161px;" width="8" height="5" viewBox="0 0 8 5" fill="none"><path d="M0 0h8l-4 4z" fill="#ddd"/></svg>
<div style="position:absolute;left:518px;top:153px;width:3px;height:21px;background:#555;"></div>
<div style="position:absolute;left:543px;top:152.5px;height:25.0px;line-height:25.0px;font-family:'Liberation Sans',sans-serif;font-size:12.5px;color:#e6e6e6;white-space:pre;letter-spacing:-0.455px;">(Global Scope)</div>
<div style="position:absolute;left:27.3px;top:173px;width:5px;height:17px;background:#57a64a;"></div>
<div style="position:absolute;left:27.3px;top:190px;width:5px;height:17px;background:#57a64a;"></div>
<div style="position:absolute;left:27.3px;top:207px;width:5px;height:17px;background:#57a64a;"></div>
<div style="position:absolute;left:27.3px;top:224px;width:5px;height:17px;background:#57a64a;"></div>
<div style="position:absolute;left:27.3px;top:241px;width:5px;height:17px;background:#57a64a;"></div>
<div style="position:absolute;left:27.3px;top:258px;width:5px;height:17px;background:#57a64a;"></div>
<div style="position:absolute;left:27.3px;top:275px;width:5px;height:17px;background:#57a64a;"></div>
<div style="position:absolute;left:27.3px;top:292px;width:5px;height:17px;background:#d7ba3a;"></div>
<div style="position:absolute;left:27.3px;top:309px;width:5px;height:17px;background:#d7ba3a;"></div>
<div style="position:absolute;left:27.3px;top:326px;width:5px;height:17px;background:#57a64a;"></div>
<div style="position:absolute;left:27.3px;top:343px;width:5px;height:17px;background:#57a64a;"></div>
<div style="position:absolute;left:27.3px;top:360px;width:5px;height:17px;background:#57a64a;"></div>
<div style="position:absolute;left:27.3px;top:377px;width:5px;height:17px;background:#d7ba3a;"></div>
<div style="position:absolute;left:27.3px;top:394px;width:5px;height:17px;background:#d7ba3a;"></div>
<div style="position:absolute;left:27.3px;top:411px;width:5px;height:17px;background:#57a64a;"></div>
<div style="position:absolute;left:27.3px;top:428px;width:5px;height:17px;background:#57a64a;"></div>
<div style="position:absolute;left:27.3px;top:445px;width:5px;height:17px;background:#57a64a;"></div>
<div style="position:absolute;left:44px;top:430px;width:737px;height:17px;background:transparent;border:1px solid #464646;border-right:none;box-sizing:border-box"></div>
<svg style="position:absolute;left:35px;top:177px;" width="10" height="10" viewBox="0 0 10 10" fill="none"><rect x="0.5" y="0.5" width="8" height="8" stroke="#999" stroke-width="1" fill="#1f1f1f"/><path d="M2 4.5h5" stroke="#ddd"/></svg>
<svg style="position:absolute;left:35px;top:228px;" width="10" height="10" viewBox="0 0 10 10" fill="none"><rect x="0.5" y="0.5" width="8" height="8" stroke="#999" stroke-width="1" fill="#1f1f1f"/><path d="M2 4.5h5" stroke="#ddd"/></svg>
<svg style="position:absolute;left:40.5px;top:186px;" width="5" height="17" viewBox="0 0 5 17" fill="none"><path d="M0.5 0v13h3" stroke="#999"/></svg>
<svg style="position:absolute;left:40.5px;top:237px;" width="4" height="222" viewBox="0 0 4 222" fill="none"><path d="M0.5 0v219h3" stroke="#999"/></svg>
<svg style="position:absolute;left:49px;top:242px;" width="2" height="187" viewBox="0 0 2 187" fill="none"><path d="M0.5 0v200" stroke="#666" stroke-dasharray="2 2"/></svg>
<div style="position:absolute;left:46px;top:170.6px;height:26.8px;line-height:26.8px;font-family:'Liberation Mono',monospace;font-size:13.4px;color:#dadada;white-space:pre;letter-spacing:-0.450px;-webkit-text-stroke:0.2px currentColor;"><span style="color:#9b9b9b">#include </span><span style="color:#d69d85">"byte.h"</span></div>
<div style="position:absolute;left:46px;top:187.6px;height:26.8px;line-height:26.8px;font-family:'Liberation Mono',monospace;font-size:13.4px;color:#dadada;white-space:pre;letter-spacing:-0.450px;-webkit-text-stroke:0.2px currentColor;"><span style="color:#9b9b9b">#include </span><span style="color:#d69d85">&lt;iostream&gt;</span></div>
<div style="position:absolute;left:46px;top:221.6px;height:26.8px;line-height:26.8px;font-family:'Liberation Mono',monospace;font-size:13.4px;color:#dadada;white-space:pre;letter-spacing:-0.450px;-webkit-text-stroke:0.2px currentColor;"><span style="color:#569cd6">int </span><span style="color:#dcdcaa">main</span><span style="color:#b4b4b4">() {</span></div>
<div style="position:absolute;left:46px;top:238.6px;height:26.8px;line-height:26.8px;font-family:'Liberation Mono',monospace;font-size:13.4px;color:#dadada;white-space:pre;letter-spacing:-0.450px;-webkit-text-stroke:0.2px currentColor;"><span style="color:#dadada">    </span><span style="color:#4ec9b0">Byte </span><span style="color:#9cdcfe">byteObj</span><span style="color:#b4b4b4">(</span><span style="color:#b5cea8">5</span><span style="color:#b4b4b4">);</span></div>
<div style="position:absolute;left:46px;top:272.6px;height:26.8px;line-height:26.8px;font-family:'Liberation Mono',monospace;font-size:13.4px;color:#dadada;white-space:pre;letter-spacing:-0.450px;-webkit-text-stroke:0.2px currentColor;"><span style="color:#dadada">    </span><span style="color:#569cd6">int </span><span style="color:#9cdcfe">valueToAdd</span><span style="color:#b4b4b4">;</span></div>
<div style="position:absolute;left:46px;top:289.6px;height:26.8px;line-height:26.8px;font-family:'Liberation Mono',monospace;font-size:13.4px;color:#dadada;white-space:pre;letter-spacing:-0.450px;-webkit-text-stroke:0.2px currentColor;"><span style="color:#dadada">    cout </span><span style="color:#b4b4b4">&lt;&lt; </span><span style="color:#d69d85">"Enter a whole number to add: "</span><span style="color:#b4b4b4">;</span></div>
<div style="position:absolute;left:46px;top:306.6px;height:26.8px;line-height:26.8px;font-family:'Liberation Mono',monospace;font-size:13.4px;color:#dadada;white-space:pre;letter-spacing:-0.450px;-webkit-text-stroke:0.2px currentColor;"><span style="color:#dadada">    cin </span><span style="color:#b4b4b4">&gt;&gt; </span><span style="color:#9cdcfe">valueToAdd</span><span style="color:#b4b4b4">;</span></div>
<div style="position:absolute;left:46px;top:340.6px;height:26.8px;line-height:26.8px;font-family:'Liberation Mono',monospace;font-size:13.4px;color:#dadada;white-space:pre;letter-spacing:-0.450px;-webkit-text-stroke:0.2px currentColor;"><span style="color:#dadada">    </span><span style="color:#4ec9b0">Byte </span><span style="color:#9cdcfe">result</span><span style="color:#b4b4b4"> = </span><span style="color:#9cdcfe">byteObj</span><span style="color:#b4b4b4">.</span><span style="color:#dcdcaa">add</span><span style="color:#b4b4b4">(</span><span style="color:#9cdcfe">valueToAdd</span><span style="color:#b4b4b4">);</span></div>
<div style="position:absolute;left:46px;top:374.6px;height:26.8px;line-height:26.8px;font-family:'Liberation Mono',monospace;font-size:13.4px;color:#dadada;white-space:pre;letter-spacing:-0.450px;-webkit-text-stroke:0.2px currentColor;"><span style="color:#dadada">    cout </span><span style="color:#b4b4b4">&lt;&lt; </span><span style="color:#d69d85">"Result (as Int): "</span><span style="color:#b4b4b4"> &lt;&lt; </span><span style="color:#9cdcfe">result</span><span style="color:#b4b4b4">.</span><span style="color:#dcdcaa">toInt</span><span style="color:#b4b4b4">() &lt;&lt; </span><span style="color:#dcdcaa">endl</span><span style="color:#b4b4b4">;</span></div>
<div style="position:absolute;left:46px;top:391.6px;height:26.8px;line-height:26.8px;font-family:'Liberation Mono',monospace;font-size:13.4px;color:#dadada;white-space:pre;letter-spacing:-0.450px;-webkit-text-stroke:0.2px currentColor;"><span style="color:#dadada">    cout </span><span style="color:#b4b4b4">&lt;&lt; </span><span style="color:#d69d85">"Result (as String): "</span><span style="color:#b4b4b4"> &lt;&lt; </span><span style="color:#9cdcfe">result</span><span style="color:#b4b4b4">.</span><span style="color:#dcdcaa">toString</span><span style="color:#b4b4b4">() &lt;&lt; </span><span style="color:#dcdcaa">endl</span><span style="color:#b4b4b4">;</span></div>
<div style="position:absolute;left:46px;top:425.6px;height:26.8px;line-height:26.8px;font-family:'Liberation Mono',monospace;font-size:13.4px;color:#dadada;white-space:pre;letter-spacing:-0.450px;-webkit-text-stroke:0.2px currentColor;"><span style="color:#dadada">    </span><span style="color:#d8a0df">return </span><span style="color:#b5cea8">0</span><span style="color:#b4b4b4">;</span></div>
<div style="position:absolute;left:46px;top:442.6px;height:26.8px;line-height:26.8px;font-family:'Liberation Mono',monospace;font-size:13.4px;color:#dadada;white-space:pre;letter-spacing:-0.450px;-webkit-text-stroke:0.2px currentColor;"><span style="color:#b4b4b4">}</span></div>
<svg style="position:absolute;left:244px;top:358px;" width="22" height="4" viewBox="0 0 22 4" fill="none"><path d="M0 3l2-2 2 2 2-2 2 2 2-2 2 2 2-2 2 2 2-2 2 2" stroke="#e04040" stroke-width="0.9"/></svg>
<div style="position:absolute;left:4px;top:503px;width:790px;height:4px;background:#1a1a1a;"></div>
<div style="position:absolute;left:4px;top:503px;width:790px;height:4px;background:#05080c;"></div>
<div style="position:absolute;left:320px;top:503px;width:474px;height:3px;background:linear-gradient(90deg,#0a1018,#2a3a4a 20%,#34465a);"></div>
<div style="position:absolute;left:19px;top:503.5px;width:37px;height:3px;background:#b8b8b8;"></div>
<div style="position:absolute;left:98px;top:503.5px;width:32px;height:3px;background:#a02030;"></div>
<div style="position:absolute;left:171px;top:503.5px;width:37px;height:3px;background:#c8c8c8;"></div>
<div style="position:absolute;left:252px;top:503.5px;width:25px;height:3px;background:#9a9a9a;"></div>
<div style="position:absolute;left:844px;top:1px;width:926px;height:375px;background:#1f1f1f;"></div>
<div style="position:absolute;left:844px;top:1px;width:48px;height:48px;background:#2b2b2b;"></div>
<svg style="position:absolute;left:860.5px;top:17.5px;" width="15" height="15" viewBox="0 0 15 15" fill="none"><rect x="0.6" y="0.6" width="11.3" height="11.3" rx="2.3" stroke="#fff" stroke-width="1.2"/><path d="M1.3 10.6l4.8-4.4 5.2 4.6" stroke="#fff" stroke-width="1.2"/><path d="M14 3.6v7.6a2.8 2.8 0 0 1-2.8 2.8H3.6" stroke="#fff" stroke-width="1.2"/><path d="M8.9 2.2v2.8M7.5 3.6h2.8" stroke="#fff" stroke-width="1"/></svg>
<div style="position:absolute;left:912px;top:11.5px;height:27.0px;line-height:27.0px;font-family:'Liberation Sans',sans-serif;font-size:13.5px;color:#ffffff;white-space:pre;letter-spacing:-0.912px;">Screenshot (20).png</div>
<svg style="position:absolute;left:1156px;top:16.5px;" width="17" height="17" viewBox="0 0 17 17" fill="none"><path d="M1.5 14.5V1.5h13v7" stroke="#fff" stroke-width="1.3"/><path d="M1.5 14.5h5" stroke="#fff" stroke-width="1.3"/><circle cx="10" cy="5" r="1.3" stroke="#fff" stroke-width="1"/><path d="M1.5 12l4-4 3 3" stroke="#fff" stroke-width="1.2"/><path d="M8 16l1-3 6-6 2 2-6 6z" fill="#fff"/></svg>
<svg style="position:absolute;left:1196px;top:16.5px;" width="17" height="17" viewBox="0 0 17 17" fill="none"><path d="M1.2 9A7 7 0 1 1 13 14" stroke="#fff" stroke-width="1.3"/><path d="M14 11.5v3.8h-4" stroke="#fff" stroke-width="1.3"/><circle cx="8" cy="8.2" r="1.5" stroke="#fff" stroke-width="1.2"/></svg>
<svg style="position:absolute;left:1236px;top:16.5px;" width="17" height="17" viewBox="0 0 17 17" fill="none"><path d="M0.5 2.8h15" stroke="#fff" stroke-width="1.3"/><path d="M6 2.5a2 1.5 0 0 1 4 0" stroke="#fff" stroke-width="1.2"/><path d="M1.8 3l1.5 12.2h9.4L14.2 3" stroke="#fff" stroke-width="1.3"/><path d="M6.3 6.5v5.5M9.7 6.5v5.5" stroke="#fff" stroke-width="1.3"/></svg>
<svg style="position:absolute;left:1276px;top:16.5px;" width="17" height="17" viewBox="0 0 17 17" fill="none"><path d="M8 14.5L2 8.3A3.4 3.4 0 0 1 8 3.6a3.4 3.4 0 0 1 6 4.7z" stroke="#8a8a8a" stroke-width="1.2"/></svg>
<svg style="position:absolute;left:1316px;top:16.5px;" width="17" height="17" viewBox="0 0 17 17" fill="none"><circle cx="8" cy="8" r="7.2" stroke="#fff" stroke-width="1.3"/><path d="M8 7v5" stroke="#fff" stroke-width="1.4"/><circle cx="8" cy="4.6" r="0.9" fill="#fff"/></svg>
<svg style="position:absolute;left:1356px;top:16.5px;" width="17" height="17" viewBox="0 0 17 17" fill="none"><path d="M6 3H1.5v12h12v-3" stroke="#fff" stroke-width="1.3"/><path d="M4.5 11.5C5 7 8 5.5 12 5.5" stroke="#fff" stroke-width="1.3"/><path d="M10 2l4 3.5-4 3.5" stroke="#fff" stroke-width="1.3"/></svg>
<svg style="position:absolute;left:1394px;top:16.5px;" width="20" height="17" viewBox="0 0 20 17" fill="none"><circle cx="2" cy="9" r="1.3" fill="#fff"/><circle cx="9.5" cy="9" r="1.3" fill="#fff"/><circle cx="17" cy="9" r="1.3" fill="#fff"/></svg>
<svg style="position:absolute;left:1510px;top:16.5px;" width="17" height="17" viewBox="0 0 17 17" fill="none"><circle cx="6.5" cy="6.5" r="5.5" stroke="#8a8a8a" stroke-width="1.2"/><path d="M10.5 10.5l4.5 4.5" stroke="#8a8a8a" stroke-width="1.3"/><path d="M3.8 6.5h5.4" stroke="#8a8a8a" stroke-width="1.2"/></svg>
<svg style="position:absolute;left:1550px;top:16.5px;" width="17" height="17" viewBox="0 0 17 17" fill="none"><circle cx="6.5" cy="6.5" r="5.5" stroke="#fff" stroke-width="1.3"/><path d="M10.5 10.5l4.5 4.5" stroke="#fff" stroke-width="1.4"/><path d="M3.8 6.5h5.4M6.5 3.8v5.4" stroke="#fff" stroke-width="1.3"/></svg>
<div style="position:absolute;left:1589px;top:11px;height:28px;line-height:28px;font-family:'Liberation Sans',sans-serif;font-size:14px;color:#ffffff;white-space:pre;letter-spacing:-0.477px;">90%</div>
<svg style="position:absolute;left:1650px;top:17px;" width="11" height="2" viewBox="0 0 11 2" fill="none"><path d="M0 0.5h10.5" stroke="#bdbdbd" stroke-width="1"/></svg>
<svg style="position:absolute;left:1696px;top:12px;" width="11" height="11" viewBox="0 0 11 11" fill="none"><rect x="0.5" y="0.5" width="9.5" height="9.5" stroke="#bdbdbd" stroke-width="1"/></svg>
<svg style="position:absolute;left:1742.5px;top:12.5px;" width="11" height="11" viewBox="0 0 11 11" fill="none"><path d="M0.5 0.5l10 10M10.5 0.5l-10 10" stroke="#bdbdbd" stroke-width="1"/></svg>
<div style="position:absolute;left:1770px;top:3px;width:8px;height:29px;background:#ffffff;"></div>
<div style="position:absolute;left:847px;top:105px;width:78px;height:17px;background:#2d2d2d;"></div>
<div style="position:absolute;left:851px;top:102.5px;height:23.0px;line-height:23.0px;font-family:'Liberation Sans',sans-serif;font-size:11.5px;color:#d0d0d0;white-space:pre;letter-spacing:-0.440px;">Byte.h*</div>
<div style="position:absolute;left:925px;top:105px;width:91px;height:17px;background:#3d3d3d;"></div>
<div style="position:absolute;left:925px;top:105px;width:91px;height:2px;background:#7160e8;"></div>
<div style="position:absolute;left:929px;top:103.5px;height:23.0px;line-height:23.0px;font-family:'Liberation Sans',sans-serif;font-size:11.5px;color:#ffffff;white-space:pre;letter-spacing:-0.505px;font-weight:bold">Byte.cpp*</div>
<svg style="position:absolute;left:986px;top:110px;" width="10" height="9" viewBox="0 0 10 9" fill="none"><path d="M1 4.5h3M4 1.5v6M4 2.5h4.5v4H4" stroke="#ddd" stroke-width="1"/></svg>
<svg style="position:absolute;left:1003px;top:110px;" width="10" height="10" viewBox="0 0 10 10" fill="none"><path d="M1 1l8 8M9 1l-8 8" stroke="#eee" stroke-width="1.3"/></svg>
<div style="position:absolute;left:1016px;top:105px;width:93px;height:17px;background:#2d2d2d;"></div>
<div style="position:absolute;left:1020px;top:102.5px;height:23.0px;line-height:23.0px;font-family:'Liberation Sans',sans-serif;font-size:11.5px;color:#d0d0d0;white-space:pre;letter-spacing:-0.210px;">Main.cpp*</div>
<div style="position:absolute;left:847px;top:122px;width:923px;height:2px;background:#7160e8;"></div>
<div style="position:absolute;left:925px;top:122px;width:91px;height:2px;background:#3d3d3d;"></div>
<div style="position:absolute;left:847px;top:124px;width:923px;height:19px;background:#3d3d3d;"></div>
<div style="position:absolute;left:847px;top:142px;width:923px;height:1px;background:#555;"></div>
<svg style="position:absolute;left:850px;top:127.5px;" width="13.299999999999999" height="12.35" viewBox="0 0 13.299999999999999 12.35" fill="none"><g transform="scale(0.95)"><rect x="0.6" y="0.6" width="12.5" height="11.5" stroke="#b0b0b0" stroke-width="1.2" fill="#303030"/><path d="M4.3 2.2v5M1.8 4.7h5M8.9 5.3v5M6.4 7.8h5" stroke="#ec5a6a" stroke-width="1.5"/></g></svg>
<div style="position:absolute;left:866px;top:122.5px;height:23.0px;line-height:23.0px;font-family:'Liberation Sans',sans-serif;font-size:11.5px;color:#e6e6e6;white-space:pre;letter-spacing:-0.295px;">Assignment 6 - More Integration</div>
<svg style="position:absolute;left:1349px;top:131px;" width="7" height="4" viewBox="0 0 7 4" fill="none"><path d="M0 0h7l-3.5 3.5z" fill="#ddd"/></svg>
<div style="position:absolute;left:1359px;top:124px;width:3px;height:19px;background:#555;"></div>
<div style="position:absolute;left:1380px;top:122.5px;height:23.0px;line-height:23.0px;font-family:'Liberation Sans',sans-serif;font-size:11.5px;color:#e6e6e6;white-space:pre;letter-spacing:-0.530px;">(Global Scope)</div>
<div style="position:absolute;left:847px;top:143px;width:15px;height:233px;background:#2a2a2a;"></div>
<div style="position:absolute;left:856px;top:140.20000000000002px;height:24.2px;line-height:24.2px;font-family:'Liberation Mono',monospace;font-size:12.1px;color:#2b91af;white-space:pre;width:40px;text-align:right;-webkit-text-stroke:0.2px currentColor;letter-spacing:0.2px">1</div>
<div style="position:absolute;left:856px;top:155.54000000000002px;height:24.2px;line-height:24.2px;font-family:'Liberation Mono',monospace;font-size:12.1px;color:#2b91af;white-space:pre;width:40px;text-align:right;-webkit-text-stroke:0.2px currentColor;letter-spacing:0.2px">2</div>
<div style="position:absolute;left:856px;top:170.88000000000002px;height:24.2px;line-height:24.2px;font-family:'Liberation Mono',monospace;font-size:12.1px;color:#2b91af;white-space:pre;width:40px;text-align:right;-webkit-text-stroke:0.2px currentColor;letter-spacing:0.2px">3</div>
<div style="position:absolute;left:856px;top:186.22px;height:24.2px;line-height:24.2px;font-family:'Liberation Mono',monospace;font-size:12.1px;color:#2b91af;white-space:pre;width:40px;text-align:right;-webkit-text-stroke:0.2px currentColor;letter-spacing:0.2px">4</div>
<div style="position:absolute;left:856px;top:201.56000000000003px;height:24.2px;line-height:24.2px;font-family:'Liberation Mono',monospace;font-size:12.1px;color:#2b91af;white-space:pre;width:40px;text-align:right;-webkit-text-stroke:0.2px currentColor;letter-spacing:0.2px">5</div>
<div style="position:absolute;left:856px;top:216.9px;height:24.2px;line-height:24.2px;font-family:'Liberation Mono',monospace;font-size:12.1px;color:#2b91af;white-space:pre;width:40px;text-align:right;-webkit-text-stroke:0.2px currentColor;letter-spacing:0.2px">6</div>
<div style="position:absolute;left:856px;top:232.24px;height:24.2px;line-height:24.2px;font-family:'Liberation Mono',monospace;font-size:12.1px;color:#2b91af;white-space:pre;width:40px;text-align:right;-webkit-text-stroke:0.2px currentColor;letter-spacing:0.2px">7</div>
<div style="position:absolute;left:856px;top:247.58px;height:24.2px;line-height:24.2px;font-family:'Liberation Mono',monospace;font-size:12.1px;color:#2b91af;white-space:pre;width:40px;text-align:right;-webkit-text-stroke:0.2px currentColor;letter-spacing:0.2px">8</div>
<div style="position:absolute;left:856px;top:262.91999999999996px;height:24.2px;line-height:24.2px;font-family:'Liberation Mono',monospace;font-size:12.1px;color:#2b91af;white-space:pre;width:40px;text-align:right;-webkit-text-stroke:0.2px currentColor;letter-spacing:0.2px">9</div>
<div style="position:absolute;left:856px;top:278.26px;height:24.2px;line-height:24.2px;font-family:'Liberation Mono',monospace;font-size:12.1px;color:#2b91af;white-space:pre;width:40px;text-align:right;-webkit-text-stroke:0.2px currentColor;letter-spacing:0.2px">10</div>
<div style="position:absolute;left:856px;top:293.6px;height:24.2px;line-height:24.2px;font-family:'Liberation Mono',monospace;font-size:12.1px;color:#2b91af;white-space:pre;width:40px;text-align:right;-webkit-text-stroke:0.2px currentColor;letter-spacing:0.2px">11</div>
<div style="position:absolute;left:856px;top:308.94px;height:24.2px;line-height:24.2px;font-family:'Liberation Mono',monospace;font-size:12.1px;color:#2b91af;white-space:pre;width:40px;text-align:right;-webkit-text-stroke:0.2px currentColor;letter-spacing:0.2px">12</div>
<div style="position:absolute;left:856px;top:324.28px;height:24.2px;line-height:24.2px;font-family:'Liberation Mono',monospace;font-size:12.1px;color:#2b91af;white-space:pre;width:40px;text-align:right;-webkit-text-stroke:0.2px currentColor;letter-spacing:0.2px">13</div>
<div style="position:absolute;left:916px;top:143.60000000000002px;width:4px;height:15.34px;background:#57a64a;"></div>
<div style="position:absolute;left:916px;top:158.94000000000003px;width:4px;height:15.34px;background:#57a64a;"></div>
<div style="position:absolute;left:916px;top:174.28000000000003px;width:4px;height:15.34px;background:#57a64a;"></div>
<div style="position:absolute;left:916px;top:189.62px;width:4px;height:15.34px;background:#57a64a;"></div>
<div style="position:absolute;left:916px;top:204.96000000000004px;width:4px;height:15.34px;background:#57a64a;"></div>
<div style="position:absolute;left:916px;top:220.3px;width:4px;height:15.34px;background:#57a64a;"></div>
<div style="position:absolute;left:916px;top:235.64000000000001px;width:4px;height:15.34px;background:#57a64a;"></div>
<div style="position:absolute;left:916px;top:250.98000000000002px;width:4px;height:15.34px;background:#57a64a;"></div>
<div style="position:absolute;left:916px;top:266.32px;width:4px;height:15.34px;background:#d7ba3a;"></div>
<div style="position:absolute;left:916px;top:281.66px;width:4px;height:15.34px;background:#57a64a;"></div>
<div style="position:absolute;left:916px;top:297.00000000000006px;width:4px;height:15.34px;background:#57a64a;"></div>
<div style="position:absolute;left:916px;top:312.34000000000003px;width:4px;height:15.34px;background:#57a64a;"></div>
<div style="position:absolute;left:916px;top:327.68px;width:4px;height:15.34px;background:#d7ba3a;"></div>
<div style="position:absolute;left:931px;top:328px;width:839px;height:15px;background:transparent;border:1px solid #464646;border-right:none;box-sizing:border-box"></div>
<svg style="position:absolute;left:922px;top:207.66000000000003px;" width="10" height="10" viewBox="0 0 10 10" fill="none"><rect x="0.5" y="0.5" width="8" height="8" stroke="#999" stroke-width="1" fill="#1f1f1f"/><path d="M2 4.5h5" stroke="#ddd"/></svg>
<svg style="position:absolute;left:926px;top:216.66000000000003px;" width="4" height="31.68" viewBox="0 0 4 31.68" fill="none"><path d="M0.5 0v30.68h3" stroke="#999"/></svg>
<svg style="position:absolute;left:934px;top:221.0px;" width="2" height="15.34" viewBox="0 0 2 15.34" fill="none"><path d="M0.5 0v16" stroke="#666" stroke-dasharray="2 2"/></svg>
<svg style="position:absolute;left:922px;top:269.02px;" width="10" height="10" viewBox="0 0 10 10" fill="none"><rect x="0.5" y="0.5" width="8" height="8" stroke="#999" stroke-width="1" fill="#1f1f1f"/><path d="M2 4.5h5" stroke="#ddd"/></svg>
<svg style="position:absolute;left:926px;top:278.02px;" width="4" height="31.68" viewBox="0 0 4 31.68" fill="none"><path d="M0.5 0v30.68h3" stroke="#999"/></svg>
<svg style="position:absolute;left:934px;top:282.36px;" width="2" height="15.34" viewBox="0 0 2 15.34" fill="none"><path d="M0.5 0v16" stroke="#666" stroke-dasharray="2 2"/></svg>
<div style="position:absolute;left:932.5px;top:140.20000000000002px;height:24.2px;line-height:24.2px;font-family:'Liberation Mono',monospace;font-size:12.1px;color:#dadada;white-space:pre;letter-spacing:-0.390px;-webkit-text-stroke:0.2px currentColor;"><span style="color:#9b9b9b">#include </span><span style="color:#d69d85">"byte.h"</span></div>
<div style="position:absolute;left:932.5px;top:170.88000000000002px;height:24.2px;line-height:24.2px;font-family:'Liberation Mono',monospace;font-size:12.1px;color:#dadada;white-space:pre;letter-spacing:-0.390px;-webkit-text-stroke:0.2px currentColor;"><span style="color:#4ec9b0">Byte</span><span style="color:#b4b4b4">::</span><span style="color:#dcdcaa">Byte</span><span style="color:#b4b4b4">(</span><span style="color:#569cd6">int </span><span style="color:#9a9a9a">value</span><span style="color:#b4b4b4">) : </span><span style="color:#dadada">value</span><span style="color:#b4b4b4">(</span><span style="color:#569cd6">static_cast</span><span style="color:#b4b4b4">&lt;</span><span style="color:#569cd6">unsigned char</span><span style="color:#b4b4b4">&gt;(</span><span style="color:#9a9a9a">value</span><span style="color:#b4b4b4">)) {}</span></div>
<div style="position:absolute;left:932.5px;top:201.56000000000003px;height:24.2px;line-height:24.2px;font-family:'Liberation Mono',monospace;font-size:12.1px;color:#dadada;white-space:pre;letter-spacing:-0.390px;-webkit-text-stroke:0.2px currentColor;"><span style="color:#569cd6">int </span><span style="color:#4ec9b0">Byte</span><span style="color:#b4b4b4">::</span><span style="color:#dcdcaa">toInt</span><span style="color:#b4b4b4">() {</span></div>
<div style="position:absolute;left:932.5px;top:216.9px;height:24.2px;line-height:24.2px;font-family:'Liberation Mono',monospace;font-size:12.1px;color:#dadada;white-space:pre;letter-spacing:-0.390px;-webkit-text-stroke:0.2px currentColor;"><span style="color:#dadada">    </span><span style="color:#d8a0df">return </span><span style="color:#dadada">value</span><span style="color:#b4b4b4">;</span></div>
<div style="position:absolute;left:932.5px;top:232.24px;height:24.2px;line-height:24.2px;font-family:'Liberation Mono',monospace;font-size:12.1px;color:#dadada;white-space:pre;letter-spacing:-0.390px;-webkit-text-stroke:0.2px currentColor;"><span style="color:#b4b4b4">}</span></div>
<div style="position:absolute;left:932.5px;top:262.91999999999996px;height:24.2px;line-height:24.2px;font-family:'Liberation Mono',monospace;font-size:12.1px;color:#dadada;white-space:pre;letter-spacing:-0.390px;-webkit-text-stroke:0.2px currentColor;"><span style="color:#4ec9b0">string </span><span style="color:#4ec9b0">Byte</span><span style="color:#b4b4b4">::</span><span style="color:#dcdcaa">toString</span><span style="color:#b4b4b4">() {</span></div>
<div style="position:absolute;left:932.5px;top:278.26px;height:24.2px;line-height:24.2px;font-family:'Liberation Mono',monospace;font-size:12.1px;color:#dadada;white-space:pre;letter-spacing:-0.390px;-webkit-text-stroke:0.2px currentColor;"><span style="color:#dadada">    </span><span style="color:#d8a0df">return </span><span style="color:#dadada">std</span><span style="color:#b4b4b4">::</span><span style="color:#dcdcaa">to_string</span><span style="color:#b4b4b4">(</span><span style="color:#dadada">value</span><span style="color:#b4b4b4">);</span></div>
<div style="position:absolute;left:932.5px;top:293.6px;height:24.2px;line-height:24.2px;font-family:'Liberation Mono',monospace;font-size:12.1px;color:#dadada;white-space:pre;letter-spacing:-0.390px;-webkit-text-stroke:0.2px currentColor;"><span style="color:#b4b4b4">}</span></div>
<div style="position:absolute;left:3px;top:507px;width:804px;height:543px;background:#1f1f1f;"></div>
<div style="position:absolute;left:807px;top:507px;width:1px;height:543px;background:#3a3a3a;"></div>
<div style="position:absolute;left:3px;top:1049px;width:805px;height:1px;background:#3a3a3a;"></div>
<div style="position:absolute;left:3px;top:507px;width:48px;height:48px;background:#2b2b2b;"></div>
<svg style="position:absolute;left:19.5px;top:523.5px;" width="15" height="15" viewBox="0 0 15 15" fill="none"><rect x="0.6" y="0.6" width="11.3" height="11.3" rx="2.3" stroke="#fff" stroke-width="1.2"/><path d="M1.3 10.6l4.8-4.4 5.2 4.6" stroke="#fff" stroke-width="1.2"/><path d="M14 3.6v7.6a2.8 2.8 0 0 1-2.8 2.8H3.6" stroke="#fff" stroke-width="1.2"/><path d="M8.9 2.2v2.8M7.5 3.6h2.8" stroke="#fff" stroke-width="1"/></svg>
<div style="position:absolute;left:71px;top:517.5px;height:27.0px;line-height:27.0px;font-family:'Liberation Sans',sans-serif;font-size:13.5px;color:#ffffff;white-space:pre;letter-spacing:-0.912px;">Screenshot (21).png</div>
<svg style="position:absolute;left:280px;top:522.5px;" width="17" height="17" viewBox="0 0 17 17" fill="none"><path d="M1.5 14.5V1.5h13v7" stroke="#fff" stroke-width="1.3"/><path d="M1.5 14.5h5" stroke="#fff" stroke-width="1.3"/><circle cx="10" cy="5" r="1.3" stroke="#fff" stroke-width="1"/><path d="M1.5 12l4-4 3 3" stroke="#fff" stroke-width="1.2"/><path d="M8 16l1-3 6-6 2 2-6 6z" fill="#fff"/></svg>
<svg style="position:absolute;left:320px;top:522.5px;" width="17" height="17" viewBox="0 0 17 17" fill="none"><path d="M1.2 9A7 7 0 1 1 13 14" stroke="#fff" stroke-width="1.3"/><path d="M14 11.5v3.8h-4" stroke="#fff" stroke-width="1.3"/><circle cx="8" cy="8.2" r="1.5" stroke="#fff" stroke-width="1.2"/></svg>
<svg style="position:absolute;left:360px;top:522.5px;" width="17" height="17" viewBox="0 0 17 17" fill="none"><path d="M0.5 2.8h15" stroke="#fff" stroke-width="1.3"/><path d="M6 2.5a2 1.5 0 0 1 4 0" stroke="#fff" stroke-width="1.2"/><path d="M1.8 3l1.5 12.2h9.4L14.2 3" stroke="#fff" stroke-width="1.3"/><path d="M6.3 6.5v5.5M9.7 6.5v5.5" stroke="#fff" stroke-width="1.3"/></svg>
<svg style="position:absolute;left:400px;top:522.5px;" width="17" height="17" viewBox="0 0 17 17" fill="none"><path d="M8 14.5L2 8.3A3.4 3.4 0 0 1 8 3.6a3.4 3.4 0 0 1 6 4.7z" stroke="#8a8a8a" stroke-width="1.2"/></svg>
<svg style="position:absolute;left:440px;top:522.5px;" width="17" height="17" viewBox="0 0 17 17" fill="none"><circle cx="8" cy="8" r="7.2" stroke="#fff" stroke-width="1.3"/><path d="M8 7v5" stroke="#fff" stroke-width="1.4"/><circle cx="8" cy="4.6" r="0.9" fill="#fff"/></svg>
<svg style="position:absolute;left:480px;top:522.5px;" width="17" height="17" viewBox="0 0 17 17" fill="none"><path d="M6 3H1.5v12h12v-3" stroke="#fff" stroke-width="1.3"/><path d="M4.5 11.5C5 7 8 5.5 12 5.5" stroke="#fff" stroke-width="1.3"/><path d="M10 2l4 3.5-4 3.5" stroke="#fff" stroke-width="1.3"/></svg>
<svg style="position:absolute;left:519px;top:522.5px;" width="20" height="17" viewBox="0 0 20 17" fill="none"><circle cx="2" cy="9" r="1.3" fill="#fff"/><circle cx="9.5" cy="9" r="1.3" fill="#fff"/><circle cx="17" cy="9" r="1.3" fill="#fff"/></svg>
<svg style="position:absolute;left:598px;top:522.5px;" width="17" height="17" viewBox="0 0 17 17" fill="none"><circle cx="6.5" cy="6.5" r="5.5" stroke="#8a8a8a" stroke-width="1.2"/><path d="M10.5 10.5l4.5 4.5" stroke="#8a8a8a" stroke-width="1.3"/><path d="M3.8 6.5h5.4" stroke="#8a8a8a" stroke-width="1.2"/></svg>
<svg style="position:absolute;left:638px;top:522.5px;" width="17" height="17" viewBox="0 0 17 17" fill="none"><circle cx="6.5" cy="6.5" r="5.5" stroke="#fff" stroke-width="1.3"/><path d="M10.5 10.5l4.5 4.5" stroke="#fff" stroke-width="1.4"/><path d="M3.8 6.5h5.4M6.5 3.8v5.4" stroke="#fff" stroke-width="1.3"/></svg>
<div style="position:absolute;left:677px;top:517px;height:28px;line-height:28px;font-family:'Liberation Sans',sans-serif;font-size:14px;color:#ffffff;white-space:pre;letter-spacing:-0.477px;">97%</div>
<svg style="position:absolute;left:746px;top:523px;" width="11" height="2" viewBox="0 0 11 2" fill="none"><path d="M0 0.5h10.5" stroke="#bdbdbd" stroke-width="1"/></svg>
<svg style="position:absolute;left:792px;top:518px;" width="11" height="11" viewBox="0 0 11 11" fill="none"><rect x="0.5" y="0.5" width="9.5" height="9.5" stroke="#bdbdbd" stroke-width="1"/></svg>
<div style="position:absolute;left:13px;top:621px;width:86px;height:19px;background:#3d3d3d;"></div>
<div style="position:absolute;left:13px;top:621px;width:86px;height:2px;background:#7160e8;"></div>
<div style="position:absolute;left:17px;top:619.5px;height:25.0px;line-height:25.0px;font-family:'Liberation Sans',sans-serif;font-size:12.5px;color:#ffffff;white-space:pre;letter-spacing:-0.440px;font-weight:bold">Byte.h*</div>
<svg style="position:absolute;left:65px;top:627px;" width="11" height="10" viewBox="0 0 11 10" fill="none"><path d="M1 5h3M4 2v6M4 3h5v4H4" stroke="#ddd" stroke-width="1.1"/></svg>
<svg style="position:absolute;left:84px;top:626px;" width="11" height="11" viewBox="0 0 11 11" fill="none"><path d="M1 1l9 9M10 1l-9 9" stroke="#eee" stroke-width="1.4"/></svg>
<div style="position:absolute;left:99px;top:622px;width:97px;height:18px;background:#2d2d2d;"></div>
<div style="position:absolute;left:104px;top:618.5px;height:25.0px;line-height:25.0px;font-family:'Liberation Sans',sans-serif;font-size:12.5px;color:#d0d0d0;white-space:pre;letter-spacing:-0.391px;">Byte.cpp*</div>
<div style="position:absolute;left:198px;top:622px;width:99px;height:18px;background:#2d2d2d;"></div>
<div style="position:absolute;left:202px;top:618.5px;height:25.0px;line-height:25.0px;font-family:'Liberation Sans',sans-serif;font-size:12.5px;color:#d0d0d0;white-space:pre;letter-spacing:-0.244px;">Main.cpp*</div>
<div style="position:absolute;left:13px;top:640px;width:794px;height:2px;background:#7160e8;"></div>
<div style="position:absolute;left:13px;top:640px;width:86px;height:2px;background:#3d3d3d;"></div>
<div style="position:absolute;left:13px;top:642px;width:794px;height:20px;background:#3d3d3d;"></div>
<div style="position:absolute;left:13px;top:662px;width:794px;height:1px;background:#555;"></div>
<svg style="position:absolute;left:17px;top:645px;" width="14.0" height="13.0" viewBox="0 0 14.0 13.0" fill="none"><g transform="scale(1.0)"><rect x="0.6" y="0.6" width="12.5" height="11.5" stroke="#b0b0b0" stroke-width="1.2" fill="#303030"/><path d="M4.3 2.2v5M1.8 4.7h5M8.9 5.3v5M6.4 7.8h5" stroke="#ec5a6a" stroke-width="1.5"/></g></svg>
<div style="position:absolute;left:34px;top:639.5px;height:25.0px;line-height:25.0px;font-family:'Liberation Sans',sans-serif;font-size:12.5px;color:#e6e6e6;white-space:pre;letter-spacing:-0.319px;">Assignment 6 - More Integration</div>
<svg style="position:absolute;left:558px;top:650px;" width="8" height="5" viewBox="0 0 8 5" fill="none"><path d="M0 0h8l-4 4z" fill="#ddd"/></svg>
<div style="position:absolute;left:567px;top:642px;width:3px;height:20px;background:#555;"></div>
<div style="position:absolute;left:592px;top:639.5px;height:25.0px;line-height:25.0px;font-family:'Liberation Sans',sans-serif;font-size:12.5px;color:#e6e6e6;white-space:pre;letter-spacing:-0.598px;">(Global Scope)</div>
<div style="position:absolute;left:5px;top:620px;width:1px;height:367px;background:#3a3a3a;"></div>
<div style="position:absolute;left:9px;top:620px;width:1px;height:367px;background:#3a3a3a;"></div>
<div style="position:absolute;left:13px;top:663px;width:16px;height:324px;background:#2a2a2a;"></div>
<div style="position:absolute;left:27px;top:658.4px;height:26.2px;line-height:26.2px;font-family:'Liberation Mono',monospace;font-size:13.1px;color:#2b91af;white-space:pre;width:41px;text-align:right;-webkit-text-stroke:0.2px currentColor;letter-spacing:0.2px">1</div>
<div style="position:absolute;left:27px;top:675.15px;height:26.2px;line-height:26.2px;font-family:'Liberation Mono',monospace;font-size:13.1px;color:#2b91af;white-space:pre;width:41px;text-align:right;-webkit-text-stroke:0.2px currentColor;letter-spacing:0.2px">2</div>
<div style="position:absolute;left:27px;top:691.9px;height:26.2px;line-height:26.2px;font-family:'Liberation Mono',monospace;font-size:13.1px;color:#2b91af;white-space:pre;width:41px;text-align:right;-webkit-text-stroke:0.2px currentColor;letter-spacing:0.2px">3</div>
<div style="position:absolute;left:27px;top:708.65px;height:26.2px;line-height:26.2px;font-family:'Liberation Mono',monospace;font-size:13.1px;color:#2b91af;white-space:pre;width:41px;text-align:right;-webkit-text-stroke:0.2px currentColor;letter-spacing:0.2px">4</div>
<div style="position:absolute;left:27px;top:725.4px;height:26.2px;line-height:26.2px;font-family:'Liberation Mono',monospace;font-size:13.1px;color:#2b91af;white-space:pre;width:41px;text-align:right;-webkit-text-stroke:0.2px currentColor;letter-spacing:0.2px">5</div>
<div style="position:absolute;left:27px;top:742.15px;height:26.2px;line-height:26.2px;font-family:'Liberation Mono',monospace;font-size:13.1px;color:#2b91af;white-space:pre;width:41px;text-align:right;-webkit-text-stroke:0.2px currentColor;letter-spacing:0.2px">6</div>
<div style="position:absolute;left:27px;top:758.9px;height:26.2px;line-height:26.2px;font-family:'Liberation Mono',monospace;font-size:13.1px;color:#2b91af;white-space:pre;width:41px;text-align:right;-webkit-text-stroke:0.2px currentColor;letter-spacing:0.2px">7</div>
<div style="position:absolute;left:27px;top:775.65px;height:26.2px;line-height:26.2px;font-family:'Liberation Mono',monospace;font-size:13.1px;color:#2b91af;white-space:pre;width:41px;text-align:right;-webkit-text-stroke:0.2px currentColor;letter-spacing:0.2px">8</div>
<div style="position:absolute;left:27px;top:792.4px;height:26.2px;line-height:26.2px;font-family:'Liberation Mono',monospace;font-size:13.1px;color:#2b91af;white-space:pre;width:41px;text-align:right;-webkit-text-stroke:0.2px currentColor;letter-spacing:0.2px">9</div>
<div style="position:absolute;left:27px;top:809.15px;height:26.2px;line-height:26.2px;font-family:'Liberation Mono',monospace;font-size:13.1px;color:#2b91af;white-space:pre;width:41px;text-align:right;-webkit-text-stroke:0.2px currentColor;letter-spacing:0.2px">10</div>
<div style="position:absolute;left:27px;top:825.9px;height:26.2px;line-height:26.2px;font-family:'Liberation Mono',monospace;font-size:13.1px;color:#2b91af;white-space:pre;width:41px;text-align:right;-webkit-text-stroke:0.2px currentColor;letter-spacing:0.2px">11</div>
<div style="position:absolute;left:27px;top:842.65px;height:26.2px;line-height:26.2px;font-family:'Liberation Mono',monospace;font-size:13.1px;color:#2b91af;white-space:pre;width:41px;text-align:right;-webkit-text-stroke:0.2px currentColor;letter-spacing:0.2px">12</div>
<div style="position:absolute;left:27px;top:859.4px;height:26.2px;line-height:26.2px;font-family:'Liberation Mono',monospace;font-size:13.1px;color:#2b91af;white-space:pre;width:41px;text-align:right;-webkit-text-stroke:0.2px currentColor;letter-spacing:0.2px">13</div>
<div style="position:absolute;left:27px;top:876.15px;height:26.2px;line-height:26.2px;font-family:'Liberation Mono',monospace;font-size:13.1px;color:#2b91af;white-space:pre;width:41px;text-align:right;-webkit-text-stroke:0.2px currentColor;letter-spacing:0.2px">14</div>
<div style="position:absolute;left:27px;top:892.9px;height:26.2px;line-height:26.2px;font-family:'Liberation Mono',monospace;font-size:13.1px;color:#2b91af;white-space:pre;width:41px;text-align:right;-webkit-text-stroke:0.2px currentColor;letter-spacing:0.2px">15</div>
<div style="position:absolute;left:27px;top:909.65px;height:26.2px;line-height:26.2px;font-family:'Liberation Mono',monospace;font-size:13.1px;color:#2b91af;white-space:pre;width:41px;text-align:right;-webkit-text-stroke:0.2px currentColor;letter-spacing:0.2px">16</div>
<div style="position:absolute;left:27px;top:926.4px;height:26.2px;line-height:26.2px;font-family:'Liberation Mono',monospace;font-size:13.1px;color:#2b91af;white-space:pre;width:41px;text-align:right;-webkit-text-stroke:0.2px currentColor;letter-spacing:0.2px">17</div>
<div style="position:absolute;left:27px;top:943.15px;height:26.2px;line-height:26.2px;font-family:'Liberation Mono',monospace;font-size:13.1px;color:#2b91af;white-space:pre;width:41px;text-align:right;-webkit-text-stroke:0.2px currentColor;letter-spacing:0.2px">18</div>
<div style="position:absolute;left:27px;top:959.9px;height:26.2px;line-height:26.2px;font-family:'Liberation Mono',monospace;font-size:13.1px;color:#2b91af;white-space:pre;width:41px;text-align:right;-webkit-text-stroke:0.2px currentColor;letter-spacing:0.2px">19</div>
<div style="position:absolute;left:88px;top:661.6px;width:4.5px;height:16.75px;background:#57a64a;"></div>
<div style="position:absolute;left:88px;top:678.35px;width:4.5px;height:16.75px;background:#57a64a;"></div>
<div style="position:absolute;left:88px;top:695.1px;width:4.5px;height:16.75px;background:#57a64a;"></div>
<div style="position:absolute;left:88px;top:711.85px;width:4.5px;height:16.75px;background:#57a64a;"></div>
<div style="position:absolute;left:88px;top:728.6px;width:4.5px;height:16.75px;background:#57a64a;"></div>
<div style="position:absolute;left:88px;top:745.35px;width:4.5px;height:16.75px;background:#57a64a;"></div>
<div style="position:absolute;left:88px;top:762.1px;width:4.5px;height:16.75px;background:#57a64a;"></div>
<div style="position:absolute;left:88px;top:778.85px;width:4.5px;height:16.75px;background:#d7ba3a;"></div>
<div style="position:absolute;left:88px;top:795.6px;width:4.5px;height:16.75px;background:#57a64a;"></div>
<div style="position:absolute;left:88px;top:812.35px;width:4.5px;height:16.75px;background:#d7ba3a;"></div>
<div style="position:absolute;left:88px;top:829.1px;width:4.5px;height:16.75px;background:#57a64a;"></div>
<div style="position:absolute;left:88px;top:845.85px;width:4.5px;height:16.75px;background:#d7ba3a;"></div>
<div style="position:absolute;left:88px;top:862.6px;width:4.5px;height:16.75px;background:#57a64a;"></div>
<div style="position:absolute;left:88px;top:879.35px;width:4.5px;height:16.75px;background:#d7ba3a;"></div>
<div style="position:absolute;left:88px;top:896.1px;width:4.5px;height:16.75px;background:#57a64a;"></div>
<div style="position:absolute;left:88px;top:912.85px;width:4.5px;height:16.75px;background:#57a64a;"></div>
<div style="position:absolute;left:88px;top:929.6px;width:4.5px;height:16.75px;background:#57a64a;"></div>
<div style="position:absolute;left:88px;top:946.35px;width:4.5px;height:16.75px;background:#57a64a;"></div>
<div style="position:absolute;left:104px;top:946px;width:703px;height:15px;background:transparent;border:1px solid #464646;border-right:none"></div>
<div style="position:absolute;left:151px;top:948px;width:1px;height:12px;background:#dddddd;"></div>
<svg style="position:absolute;left:99px;top:690.75px;" width="4" height="251.25" viewBox="0 0 4 251.25" fill="none"><path d="M0.5 0v247.25h3" stroke="#999"/></svg>
<svg style="position:absolute;left:95px;top:681.75px;" width="10" height="10" viewBox="0 0 10 10" fill="none"><rect x="0.5" y="0.5" width="8" height="8" stroke="#999" stroke-width="1" fill="#1f1f1f"/><path d="M2 4.5h5" stroke="#ddd"/></svg>
<svg style="position:absolute;left:95px;top:765.5px;" width="10" height="10" viewBox="0 0 10 10" fill="none"><rect x="0.5" y="0.5" width="8" height="8" stroke="#999" stroke-width="1" fill="#1f1f1f"/><path d="M2 4.5h5" stroke="#ddd"/></svg>
<svg style="position:absolute;left:108px;top:797.0px;" width="2" height="83.75" viewBox="0 0 2 83.75" fill="none"><path d="M0.5 0v90" stroke="#666" stroke-dasharray="2 2"/></svg>
<svg style="position:absolute;left:108px;top:897.5px;" width="2" height="16.75" viewBox="0 0 2 16.75" fill="none"><path d="M0.5 0v16" stroke="#666" stroke-dasharray="2 2"/></svg>
<div style="position:absolute;left:106px;top:657.9px;height:26.2px;line-height:26.2px;font-family:'Liberation Mono',monospace;font-size:13.1px;color:#dadada;white-space:pre;letter-spacing:-0.430px;-webkit-text-stroke:0.2px currentColor;"><span style="color:#9b9b9b">#include </span><span style="color:#d69d85">&lt;string&gt;</span></div>
<div style="position:absolute;left:106px;top:674.65px;height:26.2px;line-height:26.2px;font-family:'Liberation Mono',monospace;font-size:13.1px;color:#dadada;white-space:pre;letter-spacing:-0.430px;-webkit-text-stroke:0.2px currentColor;"><span style="color:#9b9b9b">#ifndef </span><span style="color:#dadada">BYTE_H</span></div>
<div style="position:absolute;left:106px;top:691.4px;height:26.2px;line-height:26.2px;font-family:'Liberation Mono',monospace;font-size:13.1px;color:#dadada;white-space:pre;letter-spacing:-0.430px;-webkit-text-stroke:0.2px currentColor;"><span style="color:#9b9b9b">#define </span><span style="color:#beb7ff">BYTE_H</span></div>
<div style="position:absolute;left:106px;top:724.9px;height:26.2px;line-height:26.2px;font-family:'Liberation Mono',monospace;font-size:13.1px;color:#dadada;white-space:pre;letter-spacing:-0.430px;-webkit-text-stroke:0.2px currentColor;"><span style="color:#569cd6">using </span><span style="color:#569cd6">namespace </span><span style="color:#dadada">std</span><span style="color:#b4b4b4">;</span></div>
<div style="position:absolute;left:106px;top:758.4px;height:26.2px;line-height:26.2px;font-family:'Liberation Mono',monospace;font-size:13.1px;color:#dadada;white-space:pre;letter-spacing:-0.430px;-webkit-text-stroke:0.2px currentColor;"><span style="color:#569cd6">class </span><span style="color:#4ec9b0">Byte </span><span style="color:#b4b4b4">{</span></div>
<div style="position:absolute;left:106px;top:775.15px;height:26.2px;line-height:26.2px;font-family:'Liberation Mono',monospace;font-size:13.1px;color:#dadada;white-space:pre;letter-spacing:-0.430px;-webkit-text-stroke:0.2px currentColor;"><span style="color:#569cd6">public</span><span style="color:#b4b4b4">:</span></div>
<div style="position:absolute;left:106px;top:791.9px;height:26.2px;line-height:26.2px;font-family:'Liberation Mono',monospace;font-size:13.1px;color:#dadada;white-space:pre;letter-spacing:-0.430px;-webkit-text-stroke:0.2px currentColor;"><span style="color:#dadada">    </span><span style="color:#dcdcaa">Byte</span><span style="color:#b4b4b4">(</span><span style="color:#569cd6">int </span><span style="color:#9a9a9a">value </span><span style="color:#b4b4b4">= </span><span style="color:#b5cea8">0</span><span style="color:#b4b4b4">);</span></div>
<div style="position:absolute;left:106px;top:825.4px;height:26.2px;line-height:26.2px;font-family:'Liberation Mono',monospace;font-size:13.1px;color:#dadada;white-space:pre;letter-spacing:-0.430px;-webkit-text-stroke:0.2px currentColor;"><span style="color:#dadada">    </span><span style="color:#569cd6">int </span><span style="color:#dcdcaa">toInt</span><span style="color:#b4b4b4">();</span></div>
<div style="position:absolute;left:106px;top:842.15px;height:26.2px;line-height:26.2px;font-family:'Liberation Mono',monospace;font-size:13.1px;color:#dadada;white-space:pre;letter-spacing:-0.430px;-webkit-text-stroke:0.2px currentColor;"><span style="color:#dadada">    </span><span style="color:#4ec9b0">string </span><span style="color:#dcdcaa">toString</span><span style="color:#b4b4b4">();</span></div>
<div style="position:absolute;left:106px;top:875.65px;height:26.2px;line-height:26.2px;font-family:'Liberation Mono',monospace;font-size:13.1px;color:#dadada;white-space:pre;letter-spacing:-0.430px;-webkit-text-stroke:0.2px currentColor;"><span style="color:#569cd6">private</span><span style="color:#b4b4b4">:</span></div>
<div style="position:absolute;left:106px;top:892.4px;height:26.2px;line-height:26.2px;font-family:'Liberation Mono',monospace;font-size:13.1px;color:#dadada;white-space:pre;letter-spacing:-0.430px;-webkit-text-stroke:0.2px currentColor;"><span style="color:#dadada">    </span><span style="color:#569cd6">unsigned </span><span style="color:#569cd6">char </span><span style="color:#dadada">value</span><span style="color:#b4b4b4">;</span></div>
<div style="position:absolute;left:106px;top:909.15px;height:26.2px;line-height:26.2px;font-family:'Liberation Mono',monospace;font-size:13.1px;color:#dadada;white-space:pre;letter-spacing:-0.430px;-webkit-text-stroke:0.2px currentColor;"><span style="color:#b4b4b4">};</span></div>
<div style="position:absolute;left:106px;top:942.65px;height:26.2px;line-height:26.2px;font-family:'Liberation Mono',monospace;font-size:13.1px;color:#dadada;white-space:pre;letter-spacing:-0.430px;-webkit-text-stroke:0.2px currentColor;"><span style="color:#9b9b9b">#endif</span></div>
<div style="position:absolute;left:808px;top:377px;width:1042px;height:670px;background:#1f1f1f;"></div>
<div style="position:absolute;left:808px;top:377px;width:1042px;height:1px;background:#3a3a3a;"></div>
<div style="position:absolute;left:808px;top:1046px;width:1042px;height:1px;background:#3a3a3a;"></div>
<div style="position:absolute;left:1849px;top:408px;width:1px;height:639px;background:#3a3a3a;"></div>
<div style="position:absolute;left:808px;top:377px;width:48px;height:48px;background:#2b2b2b;"></div>
<svg style="position:absolute;left:824.5px;top:393.5px;" width="15" height="15" viewBox="0 0 15 15" fill="none"><rect x="0.6" y="0.6" width="11.3" height="11.3" rx="2.3" stroke="#fff" stroke-width="1.2"/><path d="M1.3 10.6l4.8-4.4 5.2 4.6" stroke="#fff" stroke-width="1.2"/><path d="M14 3.6v7.6a2.8 2.8 0 0 1-2.8 2.8H3.6" stroke="#fff" stroke-width="1.2"/><path d="M8.9 2.2v2.8M7.5 3.6h2.8" stroke="#fff" stroke-width="1"/></svg>
<div style="position:absolute;left:876px;top:387.5px;height:27.0px;line-height:27.0px;font-family:'Liberation Sans',sans-serif;font-size:13.5px;color:#ffffff;white-space:pre;letter-spacing:-0.912px;">Screenshot (18).png</div>
<svg style="position:absolute;left:1220px;top:392.5px;" width="17" height="17" viewBox="0 0 17 17" fill="none"><path d="M1.5 14.5V1.5h13v7" stroke="#fff" stroke-width="1.3"/><path d="M1.5 14.5h5" stroke="#fff" stroke-width="1.3"/><circle cx="10" cy="5" r="1.3" stroke="#fff" stroke-width="1"/><path d="M1.5 12l4-4 3 3" stroke="#fff" stroke-width="1.2"/><path d="M8 16l1-3 6-6 2 2-6 6z" fill="#fff"/></svg>
<svg style="position:absolute;left:1260px;top:392.5px;" width="17" height="17" viewBox="0 0 17 17" fill="none"><path d="M1.2 9A7 7 0 1 1 13 14" stroke="#fff" stroke-width="1.3"/><path d="M14 11.5v3.8h-4" stroke="#fff" stroke-width="1.3"/><circle cx="8" cy="8.2" r="1.5" stroke="#fff" stroke-width="1.2"/></svg>
<svg style="position:absolute;left:1300px;top:392.5px;" width="17" height="17" viewBox="0 0 17 17" fill="none"><path d="M0.5 2.8h15" stroke="#fff" stroke-width="1.3"/><path d="M6 2.5a2 1.5 0 0 1 4 0" stroke="#fff" stroke-width="1.2"/><path d="M1.8 3l1.5 12.2h9.4L14.2 3" stroke="#fff" stroke-width="1.3"/><path d="M6.3 6.5v5.5M9.7 6.5v5.5" stroke="#fff" stroke-width="1.3"/></svg>
<svg style="position:absolute;left:1340px;top:392.5px;" width="17" height="17" viewBox="0 0 17 17" fill="none"><path d="M8 14.5L2 8.3A3.4 3.4 0 0 1 8 3.6a3.4 3.4 0 0 1 6 4.7z" stroke="#8a8a8a" stroke-width="1.2"/></svg>
<svg style="position:absolute;left:1381px;top:392.5px;" width="17" height="17" viewBox="0 0 17 17" fill="none"><circle cx="8" cy="8" r="7.2" stroke="#fff" stroke-width="1.3"/><path d="M8 7v5" stroke="#fff" stroke-width="1.4"/><circle cx="8" cy="4.6" r="0.9" fill="#fff"/></svg>
<svg style="position:absolute;left:1419px;top:392.5px;" width="20" height="17" viewBox="0 0 20 17" fill="none"><circle cx="2" cy="9" r="1.3" fill="#fff"/><circle cx="9.5" cy="9" r="1.3" fill="#fff"/><circle cx="17" cy="9" r="1.3" fill="#fff"/></svg>
<svg style="position:absolute;left:1582px;top:392.5px;" width="17" height="17" viewBox="0 0 17 17" fill="none"><circle cx="6.5" cy="6.5" r="5.5" stroke="#8a8a8a" stroke-width="1.2"/><path d="M10.5 10.5l4.5 4.5" stroke="#8a8a8a" stroke-width="1.3"/><path d="M3.8 6.5h5.4" stroke="#8a8a8a" stroke-width="1.2"/></svg>
<svg style="position:absolute;left:1622px;top:392.5px;" width="17" height="17" viewBox="0 0 17 17" fill="none"><circle cx="6.5" cy="6.5" r="5.5" stroke="#fff" stroke-width="1.3"/><path d="M10.5 10.5l4.5 4.5" stroke="#fff" stroke-width="1.4"/><path d="M3.8 6.5h5.4M6.5 3.8v5.4" stroke="#fff" stroke-width="1.3"/></svg>
<div style="position:absolute;left:1661px;top:387px;height:28px;line-height:28px;font-family:'Liberation Sans',sans-serif;font-size:14px;color:#ffffff;white-space:pre;letter-spacing:-0.477px;">64%</div>
<svg style="position:absolute;left:1722px;top:393px;" width="11" height="2" viewBox="0 0 11 2" fill="none"><path d="M0 0.5h10.5" stroke="#bdbdbd" stroke-width="1"/></svg>
<svg style="position:absolute;left:1768px;top:388px;" width="11" height="11" viewBox="0 0 11 11" fill="none"><rect x="0.5" y="0.5" width="9.5" height="9.5" stroke="#bdbdbd" stroke-width="1"/></svg>
<svg style="position:absolute;left:1813.5px;top:388.5px;" width="11" height="11" viewBox="0 0 11 11" fill="none"><path d="M0.5 0.5l10 10M10.5 0.5l-10 10" stroke="#bdbdbd" stroke-width="1"/></svg>
<div style="position:absolute;left:1850px;top:376px;width:2px;height:31px;background:#ffffff;"></div>
<div style="position:absolute;left:1061px;top:425px;width:537px;height:621px;background:#ffffff;"></div>
<div style="position:absolute;left:1591px;top:425px;width:1px;height:621px;background:#e6e6e6;"></div>
<div style="position:absolute;left:1077px;top:421.8px;height:15.6px;line-height:15.6px;font-family:'Liberation Sans',sans-serif;font-size:7.8px;color:#4a5258;white-space:pre;letter-spacing:-0.028px;">1. <b style="color:#23282c;font-weight:normal;-webkit-text-stroke:0.2px #23282c">Menu and Byte Class Integration</b>:</div>
<div style="position:absolute;left:1088.7px;top:446.3px;width:2.6px;height:2.6px;background:#808080;border-radius:50%"></div>
<div style="position:absolute;left:1097.4px;top:439.2px;height:15.6px;line-height:15.6px;font-family:'Liberation Sans',sans-serif;font-size:7.8px;color:#4a5258;white-space:pre;letter-spacing:-0.007px;">Modify your existing menu to test the Byte class.</div>
<div style="position:absolute;left:1088.7px;top:458.3px;width:2.6px;height:2.6px;background:#808080;border-radius:50%"></div>
<div style="position:absolute;left:1097.4px;top:451.2px;height:15.6px;line-height:15.6px;font-family:'Liberation Sans',sans-serif;font-size:7.8px;color:#4a5258;white-space:pre;letter-spacing:-0.060px;">Implement menu options to test the <span style="font-family:'Liberation Mono',monospace;font-size:6px;color:#e0245e;background:#f5f5f5;border:1px solid #d5d5d5;border-radius:2px;padding:1px 1.5px;letter-spacing:0">+</span>, <span style="font-family:'Liberation Mono',monospace;font-size:6px;color:#e0245e;background:#f5f5f5;border:1px solid #d5d5d5;border-radius:2px;padding:1px 1.5px;letter-spacing:0">-</span>, <span style="font-family:'Liberation Mono',monospace;font-size:6px;color:#e0245e;background:#f5f5f5;border:1px solid #d5d5d5;border-radius:2px;padding:1px 1.5px;letter-spacing:0">*</span>, <span style="font-family:'Liberation Mono',monospace;font-size:6px;color:#e0245e;background:#f5f5f5;border:1px solid #d5d5d5;border-radius:2px;padding:1px 1.5px;letter-spacing:0">/</span>, and <span style="font-family:'Liberation Mono',monospace;font-size:6px;color:#e0245e;background:#f5f5f5;border:1px solid #d5d5d5;border-radius:2px;padding:1px 1.5px;letter-spacing:0">[]</span> operators in the Byte class.</div>
<div style="position:absolute;left:1077px;top:468.2px;height:15.6px;line-height:15.6px;font-family:'Liberation Sans',sans-serif;font-size:7.8px;color:#4a5258;white-space:pre;letter-spacing:0.002px;">2. <b style="color:#23282c;font-weight:normal;-webkit-text-stroke:0.2px #23282c">Output Requirements</b>:</div>
<div style="position:absolute;left:1088.7px;top:493.3px;width:2.6px;height:2.6px;background:#808080;border-radius:50%"></div>
<div style="position:absolute;left:1097.4px;top:486.2px;height:15.6px;line-height:15.6px;font-family:'Liberation Sans',sans-serif;font-size:7.8px;color:#4a5258;white-space:pre;letter-spacing:-0.053px;">When performing arithmetic operations, display the result using both <span style="font-family:'Liberation Mono',monospace;font-size:6px;color:#e0245e;background:#f5f5f5;border:1px solid #d5d5d5;border-radius:2px;padding:1px 1.5px;letter-spacing:0">toInt</span> and <span style="font-family:'Liberation Mono',monospace;font-size:6px;color:#e0245e;background:#f5f5f5;border:1px solid #d5d5d5;border-radius:2px;padding:1px 1.5px;letter-spacing:0">toString</span> functions of the Byte class.</div>
<div style="position:absolute;left:1088.7px;top:505.0px;width:2.6px;height:2.6px;background:#808080;border-radius:50%"></div>
<div style="position:absolute;left:1097.4px;top:497.9px;height:15.6px;line-height:15.6px;font-family:'Liberation Sans',sans-serif;font-size:7.8px;color:#4a5258;white-space:pre;letter-spacing:-0.016px;">Utilize <span style="font-family:'Liberation Mono',monospace;font-size:6px;color:#e0245e;background:#f5f5f5;border:1px solid #d5d5d5;border-radius:2px;padding:1px 1.5px;letter-spacing:0">cin</span> to gather whole number inputs for these operations.</div>
<div style="position:absolute;left:1077px;top:515.2px;height:15.6px;line-height:15.6px;font-family:'Liberation Sans',sans-serif;font-size:7.8px;color:#4a5258;white-space:pre;letter-spacing:0.019px;">3. <b style="color:#23282c;font-weight:normal;-webkit-text-stroke:0.2px #23282c">Menu Class Modification</b>:</div>
<div style="position:absolute;left:1088.7px;top:540.3px;width:2.6px;height:2.6px;background:#808080;border-radius:50%"></div>
<div style="position:absolute;left:1097.4px;top:533.2px;height:15.6px;line-height:15.6px;font-family:'Liberation Sans',sans-serif;font-size:7.8px;color:#4a5258;white-space:pre;letter-spacing:-0.098px;">Replace the fixed-size array in your menu class with a <span style="font-family:'Liberation Mono',monospace;font-size:6px;color:#e0245e;background:#f5f5f5;border:1px solid #d5d5d5;border-radius:2px;padding:1px 1.5px;letter-spacing:0">vector</span> to allow dynamic menu item management.</div>
<div style="position:absolute;left:1077px;top:550.2px;height:15.6px;line-height:15.6px;font-family:'Liberation Sans',sans-serif;font-size:7.8px;color:#4a5258;white-space:pre;letter-spacing:-0.172px;">4. <b style="color:#23282c;font-weight:normal;-webkit-text-stroke:0.2px #23282c">Global Scope Usage</b>:</div>
<div style="position:absolute;left:1088.7px;top:575.3px;width:2.6px;height:2.6px;background:#808080;border-radius:50%"></div>
<div style="position:absolute;left:1097.4px;top:568.2px;height:15.6px;line-height:15.6px;font-family:'Liberation Sans',sans-serif;font-size:7.8px;color:#4a5258;white-space:pre;letter-spacing:-0.076px;">For this assignment, maintain the menu in the global scope.</div>
<div style="position:absolute;left:1088.7px;top:586.8px;width:2.6px;height:2.6px;background:#808080;border-radius:50%"></div>
<div style="position:absolute;left:1097.4px;top:579.7px;height:15.6px;line-height:15.6px;font-family:'Liberation Sans',sans-serif;font-size:7.8px;color:#4a5258;white-space:pre;letter-spacing:-0.059px;">Note: Global variables are generally discouraged in Object-Oriented Programming, but we will address this in a future lesson.</div>
<div style="position:absolute;left:1077px;top:597.3000000000001px;height:15.6px;line-height:15.6px;font-family:'Liberation Sans',sans-serif;font-size:7.8px;color:#4a5258;white-space:pre;letter-spacing:-0.041px;">5. <b style="color:#23282c;font-weight:normal;-webkit-text-stroke:0.2px #23282c">Code Organization</b>:</div>
<div style="position:absolute;left:1088.7px;top:621.9px;width:2.6px;height:2.6px;background:#808080;border-radius:50%"></div>
<div style="position:absolute;left:1097.4px;top:614.8000000000001px;height:15.6px;line-height:15.6px;font-family:'Liberation Sans',sans-serif;font-size:7.8px;color:#4a5258;white-space:pre;letter-spacing:-0.157px;">Ensure each class has its own header and <span style="font-family:'Liberation Mono',monospace;font-size:6px;color:#e0245e;background:#f5f5f5;border:1px solid #d5d5d5;border-radius:2px;padding:1px 1.5px;letter-spacing:0">.cpp</span> file.</div>
<div style="position:absolute;left:1088.7px;top:633.8px;width:2.6px;height:2.6px;background:#808080;border-radius:50%"></div>
<div style="position:absolute;left:1097.4px;top:626.7px;height:15.6px;line-height:15.6px;font-family:'Liberation Sans',sans-serif;font-size:7.8px;color:#4a5258;white-space:pre;letter-spacing:-0.013px;">Keep the main function in a separate file for clarity.</div>
<div style="position:absolute;left:1077px;top:644.0px;height:15.6px;line-height:15.6px;font-family:'Liberation Sans',sans-serif;font-size:7.8px;color:#4a5258;white-space:pre;letter-spacing:0.004px;">6. <b style="color:#23282c;font-weight:normal;-webkit-text-stroke:0.2px #23282c">Functionality Layer</b>:</div>
<div style="position:absolute;left:1088.7px;top:668.5999999999999px;width:2.6px;height:2.6px;background:#808080;border-radius:50%"></div>
<div style="position:absolute;left:1097.4px;top:661.5px;height:15.6px;line-height:15.6px;font-family:'Liberation Sans',sans-serif;font-size:7.8px;color:#4a5258;white-space:pre;letter-spacing:-0.022px;">Since the menu is set up to take pointers to void functions, create an intermediate layer of functionality to connect the menu and Byte class</div>
<div style="position:absolute;left:1097.4px;top:673.3000000000001px;height:15.6px;line-height:15.6px;font-family:'Liberation Sans',sans-serif;font-size:7.8px;color:#4a5258;white-space:pre;letter-spacing:-0.053px;">operations.</div>
<div style="position:absolute;left:1088.7px;top:692.0px;width:2.6px;height:2.6px;background:#808080;border-radius:50%"></div>
<div style="position:absolute;left:1097.4px;top:684.9000000000001px;height:15.6px;line-height:15.6px;font-family:'Liberation Sans',sans-serif;font-size:7.8px;color:#4a5258;white-space:pre;letter-spacing:0.012px;">This should follow a three-tier structure.</div>
<div style="position:absolute;left:1077px;top:702.2px;height:15.6px;line-height:15.6px;font-family:'Liberation Sans',sans-serif;font-size:7.8px;color:#4a5258;white-space:pre;letter-spacing:-0.115px;">7. <b style="color:#23282c;font-weight:normal;-webkit-text-stroke:0.2px #23282c">Example Menu Use</b>:</div>
<div style="position:absolute;left:1088.7px;top:726.9px;width:2.6px;height:2.6px;background:#808080;border-radius:50%"></div>
<div style="position:absolute;left:1097.4px;top:719.8000000000001px;height:15.6px;line-height:15.6px;font-family:'Liberation Sans',sans-serif;font-size:7.8px;color:#4a5258;white-space:pre;letter-spacing:-0.042px;">An example will be provided for reference. Remember, this is not a complete solution but a guide to assist you in your implementation.</div>
<div style="position:absolute;left:1101px;top:744.8px;width:2px;height:2px;background:#222;"></div>
<div style="position:absolute;left:1109.8px;top:737.5px;height:15.6px;line-height:15.6px;font-family:'Liberation Sans',sans-serif;font-size:7.8px;color:#4a5258;white-space:pre;letter-spacing:-0.198px;"><b style="color:#23282c;font-weight:normal;-webkit-text-stroke:0.2px #23282c">Example Function: </b><span style="font-family:'Liberation Mono',monospace;font-size:6px;color:#e0245e;background:#f5f5f5;border:1px solid #d5d5d5;border-radius:2px;padding:1px 1.5px;letter-spacing:0">testByteAddition</span>:</div>
<div style="position:absolute;left:1112.5px;top:762.2px;width:2px;height:2px;background:#222;"></div>
<div style="position:absolute;left:1121.9px;top:754.9000000000001px;height:15.6px;line-height:15.6px;font-family:'Liberation Sans',sans-serif;font-size:7.8px;color:#4a5258;white-space:pre;letter-spacing:-0.036px;">This function will be added to the menu. It creates a Byte object, performs an addition operation based on user input, and displays the</div>
<div style="position:absolute;left:1121.9px;top:766.7px;height:15.6px;line-height:15.6px;font-family:'Liberation Sans',sans-serif;font-size:7.8px;color:#4a5258;white-space:pre;letter-spacing:-0.148px;">result.</div>
<div style="position:absolute;left:1112.5px;top:790.3px;width:2px;height:2px;background:#222;"></div>
<div style="position:absolute;left:1122px;top:780.7px;width:459px;height:152.29999999999995px;background:#ffffff;border:1px solid #999;box-sizing:border-box"></div>
<div style="position:absolute;left:1122px;top:780.7px;width:5px;height:152.29999999999995px;background:#7a7a7a;"></div>
<div style="position:absolute;left:1132.5px;top:782.4000000000001px;width:443px;height:148.89999999999995px;background:#ebecee;border:1px solid #d8d8d8;box-sizing:border-box;border-radius:2px"></div>
<div style="position:absolute;left:1137.3px;top:785.8px;height:10px;line-height:10px;font-family:'Liberation Mono',monospace;font-size:10px;transform:scale(0.5);transform-origin:0 50%;color:#333;white-space:pre;letter-spacing:0.42px"><span style="color:#d03060;">void </span><span style="color:#3333cc;">testByteAddition</span><span style="color:#3a3a3a;">() {</span></div>
<div style="position:absolute;left:1137.3px;top:793.0799999999999px;height:10px;line-height:10px;font-family:'Liberation Mono',monospace;font-size:10px;transform:scale(0.5);transform-origin:0 50%;color:#333;white-space:pre;letter-spacing:0.42px"><span style="color:#3a3a3a;">    system(</span><span style="color:#c8243c;">"CLS"</span><span style="color:#3a3a3a;">);</span></div>
<div style="position:absolute;left:1137.3px;top:800.3599999999999px;height:10px;line-height:10px;font-family:'Liberation Mono',monospace;font-size:10px;transform:scale(0.5);transform-origin:0 50%;color:#333;white-space:pre;letter-spacing:0.42px"><span style="color:#3a3a3a;">    cout &lt;&lt; </span><span style="color:#c8243c;">"Testing Byte Addition"</span><span style="color:#3a3a3a;"> &lt;&lt; endl;</span></div>
<div style="position:absolute;left:1137.3px;top:814.92px;height:10px;line-height:10px;font-family:'Liberation Mono',monospace;font-size:10px;transform:scale(0.5);transform-origin:0 50%;color:#333;white-space:pre;letter-spacing:0.42px"><span style="color:#707070;font-style:italic">    // Create a Byte object with an initial value</span></div>
<div style="position:absolute;left:1137.3px;top:822.1999999999999px;height:10px;line-height:10px;font-family:'Liberation Mono',monospace;font-size:10px;transform:scale(0.5);transform-origin:0 50%;color:#333;white-space:pre;letter-spacing:0.42px"><span style="color:#3a3a3a;">    Byte byteObj(5);  </span><span style="color:#707070;font-style:italic">// Example initial value is 5</span></div>
<div style="position:absolute;left:1137.3px;top:836.76px;height:10px;line-height:10px;font-family:'Liberation Mono',monospace;font-size:10px;transform:scale(0.5);transform-origin:0 50%;color:#333;white-space:pre;letter-spacing:0.42px"><span style="color:#707070;font-style:italic">    // Ask for input</span></div>
<div style="position:absolute;left:1137.3px;top:844.04px;height:10px;line-height:10px;font-family:'Liberation Mono',monospace;font-size:10px;transform:scale(0.5);transform-origin:0 50%;color:#333;white-space:pre;letter-spacing:0.42px"><span style="color:#d03060;">    int </span><span style="color:#3a3a3a;">valueToAdd;</span></div>
<div style="position:absolute;left:1137.3px;top:851.3199999999999px;height:10px;line-height:10px;font-family:'Liberation Mono',monospace;font-size:10px;transform:scale(0.5);transform-origin:0 50%;color:#333;white-space:pre;letter-spacing:0.42px"><span style="color:#3a3a3a;">    cout &lt;&lt; </span><span style="color:#c8243c;">"Enter a whole number to add: "</span><span style="color:#3a3a3a;">;</span></div>
<div style="position:absolute;left:1137.3px;top:858.5999999999999px;height:10px;line-height:10px;font-family:'Liberation Mono',monospace;font-size:10px;transform:scale(0.5);transform-origin:0 50%;color:#333;white-space:pre;letter-spacing:0.42px"><span style="color:#3a3a3a;">    cin &gt;&gt; valueToAdd;</span></div>
<div style="position:absolute;left:1137.3px;top:873.16px;height:10px;line-height:10px;font-family:'Liberation Mono',monospace;font-size:10px;transform:scale(0.5);transform-origin:0 50%;color:#333;white-space:pre;letter-spacing:0.42px"><span style="color:#707070;font-style:italic">    // Perform addition</span></div>
<div style="position:absolute;left:1137.3px;top:880.4399999999999px;height:10px;line-height:10px;font-family:'Liberation Mono',monospace;font-size:10px;transform:scale(0.5);transform-origin:0 50%;color:#333;white-space:pre;letter-spacing:0.42px"><span style="color:#3a3a3a;">    Byte result = byteObj.add(valueToAdd);</span></div>
<div style="position:absolute;left:1137.3px;top:895.0px;height:10px;line-height:10px;font-family:'Liberation Mono',monospace;font-size:10px;transform:scale(0.5);transform-origin:0 50%;color:#333;white-space:pre;letter-spacing:0.42px"><span style="color:#707070;font-style:italic">    // Output the result using toInt and toString</span></div>
<div style="position:absolute;left:1137.3px;top:902.28px;height:10px;line-height:10px;font-family:'Liberation Mono',monospace;font-size:10px;transform:scale(0.5);transform-origin:0 50%;color:#333;white-space:pre;letter-spacing:0.42px"><span style="color:#3a3a3a;">    cout &lt;&lt; </span><span style="color:#c8243c;">"Result (as Int): "</span><span style="color:#3a3a3a;"> &lt;&lt; result.toInt() &lt;&lt; endl;</span></div>
<div style="position:absolute;left:1137.3px;top:909.56px;height:10px;line-height:10px;font-family:'Liberation Mono',monospace;font-size:10px;transform:scale(0.5);transform-origin:0 50%;color:#333;white-space:pre;letter-spacing:0.42px"><span style="color:#3a3a3a;">    cout &lt;&lt; </span><span style="color:#c8243c;">"Result (as String): "</span><span style="color:#3a3a3a;"> &lt;&lt; result.toString() &lt;&lt; endl;</span></div>
<div style="position:absolute;left:1137.3px;top:916.8399999999999px;height:10px;line-height:10px;font-family:'Liberation Mono',monospace;font-size:10px;transform:scale(0.5);transform-origin:0 50%;color:#333;white-space:pre;letter-spacing:0.42px"><span style="color:#3a3a3a;">}</span></div>
<div style="position:absolute;left:1101px;top:939.2px;width:2px;height:2px;background:#222;"></div>
<div style="position:absolute;left:1109.8px;top:931.9000000000001px;height:15.6px;line-height:15.6px;font-family:'Liberation Sans',sans-serif;font-size:7.8px;color:#4a5258;white-space:pre;letter-spacing:0.053px;"><b style="color:#23282c;font-weight:normal;-webkit-text-stroke:0.2px #23282c">Add the Function to the Menu:</b></div>
<div style="position:absolute;left:1112.5px;top:950.7px;width:2px;height:2px;background:#222;"></div>
<div style="position:absolute;left:1121.9px;top:943.4000000000001px;height:15.6px;line-height:15.6px;font-family:'Liberation Sans',sans-serif;font-size:7.8px;color:#4a5258;white-space:pre;letter-spacing:-0.072px;">In <span style="font-family:'Liberation Mono',monospace;font-size:6px;color:#e0245e;background:#f5f5f5;border:1px solid #d5d5d5;border-radius:2px;padding:1px 1.5px;letter-spacing:0">main.cpp</span>, add this function to the menu:</div>
<div style="position:absolute;left:1112.5px;top:967.3px;width:2px;height:2px;background:#222;"></div>
<div style="position:absolute;left:1122px;top:957.4px;width:459px;height:57.10000000000002px;background:#ffffff;border:1px solid #999;box-sizing:border-box"></div>
<div style="position:absolute;left:1122px;top:957.4px;width:5px;height:57.10000000000002px;background:#7a7a7a;"></div>
<div style="position:absolute;left:1132.5px;top:959.1px;width:443px;height:53.700000000000024px;background:#ebecee;border:1px solid #d8d8d8;box-sizing:border-box;border-radius:2px"></div>
<div style="position:absolute;left:1137.3px;top:962.8px;height:10px;line-height:10px;font-family:'Liberation Mono',monospace;font-size:10px;transform:scale(0.5);transform-origin:0 50%;color:#333;white-space:pre;letter-spacing:0.42px"><span style="color:#d03060;">int </span><span style="color:#3333cc;">main</span><span style="color:#3a3a3a;">() {</span></div>
<div style="position:absolute;left:1137.3px;top:970.0799999999999px;height:10px;line-height:10px;font-family:'Liberation Mono',monospace;font-size:10px;transform:scale(0.5);transform-origin:0 50%;color:#333;white-space:pre;letter-spacing:0.42px"><span style="color:#3a3a3a;">    Menu m;</span></div>
<div style="position:absolute;left:1137.3px;top:977.3599999999999px;height:10px;line-height:10px;font-family:'Liberation Mono',monospace;font-size:10px;transform:scale(0.5);transform-origin:0 50%;color:#333;white-space:pre;letter-spacing:0.42px"><span style="color:#3a3a3a;">    m.addMenu(</span><span style="color:#c8243c;">"1. Test Byte Addition"</span><span style="color:#3a3a3a;">, testByteAddition);</span></div>
<div style="position:absolute;left:1137.3px;top:984.64px;height:10px;line-height:10px;font-family:'Liberation Mono',monospace;font-size:10px;transform:scale(0.5);transform-origin:0 50%;color:#333;white-space:pre;letter-spacing:0.42px"><span style="color:#707070;font-style:italic">    // ... other menu items</span></div>
<div style="position:absolute;left:1137.3px;top:991.92px;height:10px;line-height:10px;font-family:'Liberation Mono',monospace;font-size:10px;transform:scale(0.5);transform-origin:0 50%;color:#333;white-space:pre;letter-spacing:0.42px"><span style="color:#3a3a3a;">    m.runMenu();</span></div>
<div style="position:absolute;left:1137.3px;top:999.1999999999999px;height:10px;line-height:10px;font-family:'Liberation Mono',monospace;font-size:10px;transform:scale(0.5);transform-origin:0 50%;color:#333;white-space:pre;letter-spacing:0.42px"><span style="color:#3a3a3a;">}</span></div>
<div style="position:absolute;left:1112.5px;top:1020.2px;width:2px;height:2px;background:#222;"></div>
<div style="position:absolute;left:1121.9px;top:1012.9000000000001px;height:15.6px;line-height:15.6px;font-family:'Liberation Sans',sans-serif;font-size:7.8px;color:#4a5258;white-space:pre;letter-spacing:-0.024px;">The key idea is to create functions that showcase different functionalities of the Byte class (like addition, subtraction, etc.) and then</div>
<div style="position:absolute;left:1121.9px;top:1024.7px;height:15.6px;line-height:15.6px;font-family:'Liberation Sans',sans-serif;font-size:7.8px;color:#4a5258;white-space:pre;letter-spacing:-0.006px;">add these functions to the Menu. Each menu item could correspond to a different Byte operation.</div>
</body></html>
